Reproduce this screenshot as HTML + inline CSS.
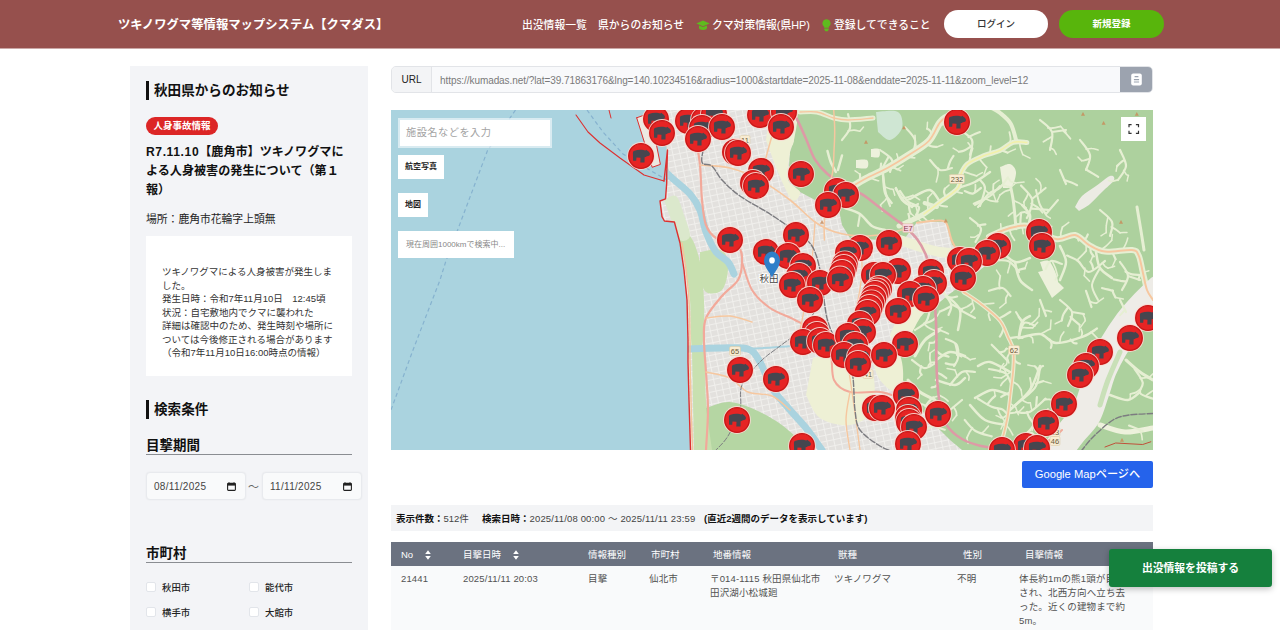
<!DOCTYPE html>
<html lang="ja">
<head>
<meta charset="utf-8">
<title>ツキノワグマ等情報マップシステム【クマダス】</title>
<style>
*{box-sizing:border-box;margin:0;padding:0}
html,body{width:1280px;height:630px;overflow:hidden;background:#fff}
body{font-family:"Liberation Sans","Noto Sans CJK JP",sans-serif;color:#222;position:relative;font-size:12px}
.abs{position:absolute}
/* header */
#hdr{position:absolute;left:0;top:0;width:1280px;height:48px;background:#96504d;box-shadow:0 1px 0 rgba(150,80,77,.5)}
#hdr .title{position:absolute;left:118px;top:1px;line-height:48px;color:#fff;font-weight:700;font-size:12.35px;white-space:nowrap}
#hdr .nav{position:absolute;top:1px;line-height:48px;color:#fff;font-weight:500;font-size:10.8px;white-space:nowrap}
.btn-login{position:absolute;left:944px;top:10px;width:104px;height:28px;border-radius:14px;background:#fff;color:#333;font-size:9.5px;text-align:center;line-height:28px;font-weight:500}
.btn-reg{position:absolute;left:1059px;top:10px;width:105px;height:28px;border-radius:14px;background:#58b50c;color:#fff;font-size:9.5px;text-align:center;line-height:28px;font-weight:700}
/* sidebar */
#side{position:absolute;left:130px;top:66px;width:238px;height:564px;background:#f3f4f7}
.h2{position:absolute;left:16px;border-left:3px solid #111;padding-left:5px;font-weight:700;font-size:13.6px;line-height:19px;margin-top:-1px;color:#111;white-space:nowrap}
.badge{position:absolute;left:16px;top:51px;width:72px;height:18px;border-radius:10px;background:#dc2626;color:#fff;font-weight:700;font-size:9.5px;line-height:18px;text-align:center}
.newsT{position:absolute;left:16px;top:77px;width:216px;white-space:nowrap;font-weight:700;font-size:12.1px;line-height:19.2px;color:#111}
.place{position:absolute;left:16px;top:144px;font-size:10.8px;line-height:18px;color:#222;white-space:nowrap}
.card{position:absolute;left:16px;top:170px;width:206px;height:140px;background:#fff}
.card p{position:absolute;left:16px;top:29px;width:176px;font-size:9.5px;line-height:13.5px;color:#333}
.h3{position:absolute;left:16px;width:206px;border-bottom:1px solid #8a8d92;font-weight:700;font-size:13.5px;line-height:20px;color:#111}
.date{position:absolute;top:406px;height:28px;width:100px;background:#f9fafb;border:1px solid #e8eaee;border-radius:4px;font-size:10px;line-height:28px;padding-left:7px;color:#444;letter-spacing:.3px;box-shadow:0 0 2px rgba(0,0,0,.06)}
.date svg{position:absolute;right:9px;top:9px}
.cb{position:absolute;width:10px;height:10px;border:1px solid #e2e5ea;background:#fff;border-radius:2px}
.cbl{position:absolute;font-size:9.4px;line-height:14px;font-weight:500;color:#222;white-space:nowrap}
/* main */
#url{position:absolute;left:391px;top:66px;width:762px;height:27px;border:1px solid #e2e4e8;border-radius:5px;background:#f8f9fb;overflow:hidden}
#url .lab{position:absolute;left:0;top:0;width:40px;height:25px;background:#f3f4f6;border-right:1px solid #e2e4e8;font-size:10px;font-weight:500;text-align:center;line-height:26px;color:#222}
#url .val{position:absolute;left:48px;top:1px;line-height:26px;font-size:10px;color:#7a7a7a;white-space:nowrap;letter-spacing:-.07px}
#url .cp{position:absolute;right:-1px;top:-1px;width:33px;height:27px;background:#9ca3af}
#url .cp svg{position:absolute;left:11px;top:7px}
#map{position:absolute;left:391px;top:110px;width:762px;height:340px;overflow:hidden;background:#aad3df}
.gm{position:absolute;left:1022px;top:461px;width:131px;height:27px;background:#2563eb;color:#fff;font-size:11.2px;line-height:27px;text-align:center;border-radius:2px;font-weight:500}
.info{position:absolute;left:391px;top:505px;width:762px;height:26px;background:#f3f4f6;font-size:9.5px;line-height:27px;color:#444;white-space:nowrap}
.info b{font-weight:700;color:#111}
.thead{position:absolute;left:391px;top:542px;width:762px;height:24px;background:#6b7280;color:#fff;font-size:9.5px;line-height:25px}
.thead span{position:absolute;top:0;white-space:nowrap}
.trow{position:absolute;left:391px;top:566px;width:762px;height:64px;background:#f9fafb;font-size:9.5px;line-height:14px;color:#525252;letter-spacing:.15px}
.trow span{position:absolute;top:6px}
.post{position:absolute;left:1109px;top:549px;width:163px;height:38px;background:#15803d;border-radius:3px;color:#fff;font-weight:700;font-size:10.8px;line-height:38px;text-align:center;box-shadow:0 2px 6px rgba(0,0,0,.25)}

.msearch{position:absolute;left:7px;top:8px;width:154px;height:30px;background:#fff;border:2px solid rgba(255,255,255,.55);background-clip:padding-box;font-size:10.2px;line-height:26px;color:#a3a3a3;padding-left:6px;letter-spacing:.5px}
.mbtn{position:absolute;height:24px;background:#fff;font-size:8px;font-weight:700;color:#222;text-align:center;line-height:24px;white-space:nowrap}
.mstat{position:absolute;left:7px;top:121px;width:116px;height:27px;background:#fff;font-size:8px;color:#888;line-height:27px;padding-left:8px;white-space:nowrap}
.mfull{position:absolute;left:730px;top:7px;width:25px;height:24px;background:#fff}
</style>
</head>
<body>
<div id="hdr">
  <div class="title">ツキノワグマ等情報マップシステム【クマダス】</div>
  <div class="nav" style="left:522px">出没情報一覧</div>
  <div class="nav" style="left:598px">県からのお知らせ</div>
  <svg class="abs" style="left:696px;top:20px" width="14" height="11" viewBox="0 0 14 11"><path d="M0.3 3.4 L7 0.6 L13.7 3.4 L7 6.2 Z M3 5.4 V8 C3 9.2 4.8 10 7 10 S11 9.2 11 8 V5.4 L7 7.1 Z" fill="#5fba1e"/></svg>
  <div class="nav" style="left:712px">クマ対策情報(県HP)</div>
  <svg class="abs" style="left:822px;top:19px" width="9" height="13" viewBox="0 0 9 13"><path d="M4.5 0.3 A4.1 4.1 0 0 1 6.9 7.7 V8.8 H2.100 V7.7 A4.1 4.1 0 0 1 4.5 0.300 Z M2.300 9.600 H6.700 V10.8 L5.700 12.3 H3.300 L2.300 10.8 Z" fill="#5fba1e"/></svg>
  <div class="nav" style="left:834px">登録してできること</div>
  <div class="btn-login">ログイン</div>
  <div class="btn-reg">新規登録</div>
</div>

<div id="side">
  <div class="h2" style="top:16px">秋田県からのお知らせ</div>
  <div class="badge">人身事故情報</div>
  <div class="newsT"><span style="letter-spacing:.6px">R7.11.10</span>【鹿角市】ツキノワグマに<br>よる人身被害の発生について（第１<br>報）</div>
  <div class="place">場所：鹿角市花輪字上頭無</div>
  <div class="card"><p>ツキノワグマによる人身被害が発生しました。<br>発生日時：令和7年11月10日　12:45頃<br>状況：自宅敷地内でクマに襲われた<br>詳細は確認中のため、発生時刻や場所については今後修正される場合があります<br>（令和7年11月10日16:00時点の情報）</p></div>
  <div class="h2" style="top:335px">検索条件</div>
  <div class="h3" style="top:371px;line-height:17px">目撃期間</div>
  <div class="date" style="left:16px">08/11/2025<svg width="9" height="9" viewBox="0 0 9 9"><path d="M2 0.300 V1.400 M7 0.300 V1.400" stroke="#222" stroke-width="1"/><rect x="0.6" y="1.4" width="7.8" height="7" rx="0.8" fill="none" stroke="#222" stroke-width="1.1"/><rect x="0.6" y="1.4" width="7.8" height="2.200" fill="#222"/></svg></div>
  <div class="abs" style="left:118px;top:412px;font-size:11px;color:#666">～</div>
  <div class="date" style="left:132px">11/11/2025<svg width="9" height="9" viewBox="0 0 9 9"><path d="M2 0.300 V1.400 M7 0.300 V1.400" stroke="#222" stroke-width="1"/><rect x="0.6" y="1.4" width="7.8" height="7" rx="0.8" fill="none" stroke="#222" stroke-width="1.1"/><rect x="0.6" y="1.4" width="7.8" height="2.200" fill="#222"/></svg></div>
  <div class="h3" style="top:479px;line-height:17px">市町村</div>
  <div class="cb" style="left:16px;top:516px"></div><div class="cbl" style="left:32px;top:515px">秋田市</div>
  <div class="cb" style="left:119px;top:516px"></div><div class="cbl" style="left:135px;top:515px">能代市</div>
  <div class="cb" style="left:16px;top:541px"></div><div class="cbl" style="left:32px;top:539.5px">横手市</div>
  <div class="cb" style="left:119px;top:541px"></div><div class="cbl" style="left:135px;top:539.5px">大館市</div>
</div>

<div id="url">
  <div class="lab">URL</div>
  <div class="val">https://kumadas.net/?lat=39.71863176&amp;lng=140.10234516&amp;radius=1000&amp;startdate=2025-11-08&amp;enddate=2025-11-11&amp;zoom_level=12</div>
  <div class="cp"><svg width="11" height="13" viewBox="0 0 11 13"><rect x="0.200" y="0.600" width="10.600" height="12" rx="2" fill="#fff"/><path d="M3.600 3.600H7.400M2.900 6.600H8.100M2.900 9H8.100" stroke="#9ca3af" stroke-width="1.200"/></svg></div>
</div>

<div id="map">
<svg width="762" height="340" viewBox="0 0 762 340" style="position:absolute;left:0;top:0">
<defs>
<clipPath id="landclip"><path d="M272.0 0.0 L275.7 40.0 L277.9 64.4 L275.7 73.3 L274.5 88.9 L269.0 91.0 L271.0 106.7 L273.4 111.0 L283.4 112.0 L289.0 133.0 L293.0 160.0 L296.0 190.0 L297.0 230.0 L297.0 252.0 L298.0 290.0 L299.5 340.0 L762.0 340.0 L762.0 0.0Z"/></clipPath>
<g id="mk"><circle r="13.9" fill="#fbd9d1" opacity=".92"/><circle r="12.3" fill="#e62424" stroke="#c81616" stroke-width="1.3"/><path d="M-7.9 4.700 L-8.100 -2.600 C-8.100 -4.200 -7.600 -4.900 -6.400 -5.200 C-4.400 -5.800 -2.200 -6.300 -0.300 -6.200 C1.600 -6.200 3 -5.900 4.300 -5.600 L5.400 -6.200 L6.400 -5.300 C7.600 -4.800 8.600 -3.600 8.900 -2.400 L8.700 -0.700 C7.800 -0.100 6.800 0.200 5.800 0.300 L4.800 1.100 L3.600 1.300 L3.500 6.600 L-0.700 6.600 L-0.500 1.700 L-4.500 1.500 L-4.800 4.700 Z" fill="#46464f"/></g>
<pattern id="st" width="7" height="6" patternUnits="userSpaceOnUse" patternTransform="rotate(-12)"><rect width="7" height="6" fill="#e3e1de"/><path d="M0 0.5H7M0.5 0V6" stroke="#f2f1ed" stroke-width=".9"/></pattern>
</defs>
<rect width="762" height="340" fill="#aad3df"/>
<path d="M124.5 0 L96.5 40.6 L67 119 L54.6 152 L49 170 L22 240 L0 300" fill="none" stroke="#86b2cf" stroke-width="1.2" stroke-dasharray="4 3"/>
<path d="M196 0 L212 22 L232 44 L262 62 L276 70" fill="none" stroke="#86b2cf" stroke-width="1.2" stroke-dasharray="4 3"/>
<path d="M-5 340 L24 262 L50 196 L62 150" fill="none" stroke="#8bb9cf" stroke-width="1" stroke-dasharray="4 3" opacity="0"/>
<path d="M272.0 0.0 L275.7 40.0 L277.9 64.4 L275.7 73.3 L274.5 88.9 L269.0 91.0 L271.0 106.7 L273.4 111.0 L283.4 112.0 L289.0 133.0 L293.0 160.0 L296.0 190.0 L297.0 230.0 L297.0 252.0 L298.0 290.0 L299.5 340.0 L762.0 340.0 L762.0 0.0Z" fill="#add19e"/>
<path d="M245.7 7.8 L259.0 3.0 L269.4 54.4 L261.2 57.3Z" fill="#ece9e2"/>
<g clip-path="url(#landclip)">
<path d="M209.0 0.0 L405.0 0.0 L403.0 30.0 L399.0 42.0 L397.0 70.0 L409.0 82.0 L424.0 90.0 L447.0 95.0 L451.0 115.0 L459.0 128.0 L489.0 130.0 L514.0 128.0 L526.0 112.0 L555.0 112.0 L561.0 135.0 L584.0 142.0 L605.0 130.0 L621.0 136.0 L594.0 156.0 L573.0 173.0 L556.0 186.0 L543.0 197.0 L529.0 205.0 L514.0 215.0 L508.0 243.0 L512.0 270.0 L522.0 290.0 L539.0 310.0 L559.0 330.0 L571.0 340.0 L209.0 340.0Z" fill="url(#st)"/>
<path d="M287.0 126.0 C289.0 126.0 295.3 121.7 299.0 126.0 C302.7 130.3 306.7 141.3 309.0 152.0 C311.3 162.7 312.5 177.0 313.0 190.0 C313.5 203.0 312.7 222.0 312.0 230.0 C311.3 238.0 310.8 236.7 309.0 238.0 C307.2 239.3 302.7 246.0 301.0 238.0 C299.3 230.0 300.2 204.3 299.0 190.0 C297.8 175.7 294.8 158.3 294.0 152.0Z" fill="#c8e0b0" />
<path d="M301.0 242.0 C303.0 242.0 310.7 234.0 313.0 242.0 C315.3 250.0 313.7 273.7 315.0 290.0 C316.3 306.3 323.0 331.7 321.0 340.0 C319.0 348.3 306.0 340.0 303.0 340.0Z" fill="#c8e0b0" />
<path d="M309.0 142.0 C312.7 141.7 326.3 137.3 331.0 140.0 C335.7 142.7 337.0 151.3 337.0 158.0 C337.0 164.7 334.7 176.0 331.0 180.0 C327.3 184.0 318.7 184.5 315.0 182.0 C311.3 179.5 310.0 167.8 309.0 165.0Z" fill="#c8e0b0" />
<path d="M315.0 298.0 C319.0 297.0 330.0 291.3 339.0 292.0 C348.0 292.7 359.3 297.3 369.0 302.0 C378.7 306.7 390.3 313.7 397.0 320.0 C403.7 326.3 421.7 336.7 409.0 340.0 C396.3 343.3 335.7 340.0 321.0 340.0Z" fill="#b5d6a3" />
<path d="M273.0 90.0 C275.0 89.3 281.7 83.5 285.0 86.0 C288.3 88.5 290.7 98.3 293.0 105.0 C295.3 111.7 299.7 121.8 299.0 126.0 C298.3 130.2 292.0 132.3 289.0 130.0 C286.0 127.7 282.3 115.0 281.0 112.0Z" fill="#dbe8cc" />
<path d="M489.0 230.0 C492.2 232.2 504.2 236.3 508.0 243.0 C511.8 249.7 512.7 263.5 512.0 270.0 C511.3 276.5 507.8 282.0 504.0 282.0 C500.2 282.0 492.8 275.3 489.0 270.0 C485.2 264.7 482.3 253.3 481.0 250.0Z" fill="#eef0d5" />
<path d="M379.0 2.0 C383.3 1.7 401.0 -4.7 405.0 0.0 C409.0 4.7 404.0 23.0 403.0 30.0 C402.0 37.0 400.0 35.3 399.0 42.0 C398.0 48.7 395.3 63.3 397.0 70.0 C398.7 76.7 408.3 78.7 409.0 82.0 C409.7 85.3 404.7 93.3 401.0 90.0 C397.3 86.7 391.3 72.0 387.0 62.0 C382.7 52.0 377.0 35.3 375.0 30.0Z" fill="#eef0d5" />
<path d="M422.0 248.0 C428.2 247.0 449.2 240.0 459.0 242.0 C468.8 244.0 477.3 250.3 481.0 260.0 C484.7 269.7 484.7 290.8 481.0 300.0 C477.3 309.2 467.7 313.7 459.0 315.0 C450.3 316.3 436.3 313.0 429.0 308.0 C421.7 303.0 417.3 288.8 415.0 285.0Z" fill="#eef0d5" />
<path d="M514.0 190.0 C518.8 190.0 540.5 187.0 543.0 190.0 C545.5 193.0 533.0 202.0 529.0 208.0 C525.0 214.0 522.5 220.7 519.0 226.0 C515.5 231.3 511.3 240.2 508.0 240.0 C504.7 239.8 500.5 227.5 499.0 225.0Z" fill="#eef0d5" />
<path d="M271.0 58.0 C272.7 59.7 276.3 63.7 281.0 68.0 C285.7 72.3 294.3 78.7 299.0 84.0 C303.7 89.3 306.3 93.7 309.0 100.0 C311.7 106.3 312.3 115.0 315.0 122.0 C317.7 129.0 321.3 137.0 325.0 142.0 C328.7 147.0 334.0 148.3 337.0 152.0 C340.0 155.7 342.0 162.0 343.0 164.0" fill="none" stroke="#aad3df" stroke-width="7" stroke-linecap="round" stroke-linejoin="round" />
<path d="M298.0 239.0 C303.2 238.8 319.2 238.0 329.0 238.0 C338.8 238.0 350.3 236.7 357.0 239.0 C363.7 241.3 365.0 245.5 369.0 252.0 C373.0 258.5 376.0 270.0 381.0 278.0 C386.0 286.0 393.3 293.3 399.0 300.0 C404.7 306.7 409.7 311.3 415.0 318.0 C420.3 324.7 428.3 336.3 431.0 340.0" fill="none" stroke="#aad3df" stroke-width="7" stroke-linecap="round" stroke-linejoin="round" />
<path d="M357.0 239.0 C365.7 238.3 396.7 236.8 409.0 235.0 C421.3 233.2 427.3 229.2 431.0 228.0" fill="none" stroke="#aad3df" stroke-width="2" stroke-linecap="round" stroke-linejoin="round" />
<path d="M459.0 78.0 C461.8 76.3 469.6 71.3 475.8 68.0 C482.0 64.7 489.5 61.8 496.4 58.0 C503.3 54.2 510.1 50.0 517.0 45.5 C523.9 41.0 532.5 36.5 537.8 31.0 C543.1 25.5 545.5 16.6 549.0 12.4 C552.5 8.2 556.2 6.2 559.0 6.0 C561.8 5.8 564.8 10.2 566.0 11.0" fill="none" stroke="#e6efd3" stroke-width="7" stroke-linecap="round" stroke-linejoin="round" />
<path d="M508.0 116.0 C512.2 114.0 526.2 108.0 533.0 104.0 C539.8 100.0 543.3 96.3 549.0 92.0 C554.7 87.7 563.5 82.5 567.0 78.0 C570.5 73.5 568.1 68.7 569.7 64.7 C571.3 60.7 572.6 57.1 576.4 54.0 C580.2 50.9 587.2 48.1 592.6 45.8 C598.0 43.6 603.9 42.7 608.8 40.5 C613.7 38.3 617.5 33.8 622.0 32.4 C626.5 31.1 633.5 32.4 635.8 32.4" fill="none" stroke="#e6efd3" stroke-width="5" stroke-linecap="round" stroke-linejoin="round" />
<path d="M625.0 29.7 C624.1 27.0 622.3 18.0 619.6 13.5 C616.9 9.0 611.9 5.3 608.8 2.7 C605.6 0.1 602.1 -1.2 600.7 -2.0" fill="none" stroke="#e6efd3" stroke-width="4" stroke-linecap="round" stroke-linejoin="round" />
<path d="M615.5 58.0 C616.6 63.2 620.4 78.9 622.0 89.0 C623.6 99.1 624.5 113.7 625.0 118.7" fill="none" stroke="#e6efd3" stroke-width="3" stroke-linecap="round" stroke-linejoin="round" />
<path d="M609.0 57.0 C610.7 56.5 616.3 53.2 619.0 54.0 C621.7 54.8 624.7 58.3 625.0 62.0 C625.3 65.7 623.2 73.3 621.0 76.0 C618.8 78.7 613.5 77.7 612.0 78.0Z" fill="#edf1dc" />
<path d="M684.0 97.0 C685.2 95.2 687.5 89.5 691.0 86.0 C694.5 82.5 700.3 79.3 705.0 76.0 C709.7 72.7 716.0 67.0 719.0 66.0 C722.0 65.0 724.3 67.3 723.0 70.0 C721.7 72.7 715.0 78.0 711.0 82.0 C707.0 86.0 702.8 90.8 699.0 94.0 C695.2 97.2 689.8 99.8 688.0 101.0Z" fill="#ecebe4" />
<path d="M598.0 126.7 C601.1 125.4 610.2 120.5 616.9 118.7 C623.6 116.9 630.0 114.3 638.0 116.0 C646.0 117.7 657.3 127.5 665.0 129.0 C672.7 130.5 678.5 124.0 684.0 125.0 C689.5 126.0 692.8 132.0 697.8 134.8 C702.8 137.6 706.8 140.7 714.0 141.6 C721.2 142.5 735.4 139.3 741.0 140.0 C746.6 140.7 745.9 142.0 747.7 145.6 C749.5 149.2 750.3 156.1 751.7 161.8 C753.1 167.5 755.3 177.0 756.0 180.0" fill="none" stroke="#e6efd3" stroke-width="6" stroke-linecap="round" stroke-linejoin="round" />
<path d="M746.0 97.0 C746.7 101.0 748.8 113.8 750.0 121.0 C751.2 128.2 752.5 136.8 753.0 140.0" fill="none" stroke="#e6efd3" stroke-width="3" stroke-linecap="round" stroke-linejoin="round" />
<path d="M631.0 95.0 C632.3 96.7 638.0 101.5 639.0 105.0 C640.0 108.5 637.3 114.2 637.0 116.0" fill="none" stroke="#e6efd3" stroke-width="2.5" stroke-linecap="round" stroke-linejoin="round" />
<path d="M645.0 80.0 C645.7 82.5 647.3 91.0 649.0 95.0 C650.7 99.0 654.0 102.5 655.0 104.0" fill="none" stroke="#e6efd3" stroke-width="2" stroke-linecap="round" stroke-linejoin="round" />
<path d="M655.0 104.0 C657.0 101.7 665.0 92.3 667.0 90.0" fill="none" stroke="#e6efd3" stroke-width="2" stroke-linecap="round" stroke-linejoin="round" />
<path d="M549.0 92.0 C547.3 90.0 543.2 81.0 539.0 80.0 C534.8 79.0 526.5 85.0 524.0 86.0" fill="none" stroke="#e6efd3" stroke-width="2.5" stroke-linecap="round" stroke-linejoin="round" />
<path d="M567.0 78.0 C569.8 77.0 578.7 74.7 584.0 72.0 C589.3 69.3 596.5 63.7 599.0 62.0" fill="none" stroke="#e6efd3" stroke-width="2.5" stroke-linecap="round" stroke-linejoin="round" />
<path d="M584.0 95.0 C586.5 93.5 594.8 89.2 599.0 86.0 C603.2 82.8 607.3 77.7 609.0 76.0" fill="none" stroke="#e6efd3" stroke-width="2" stroke-linecap="round" stroke-linejoin="round" />
<path d="M609.0 140.0 C611.5 142.0 619.0 150.7 624.0 152.0 C629.0 153.3 636.5 148.7 639.0 148.0" fill="none" stroke="#e6efd3" stroke-width="2.5" stroke-linecap="round" stroke-linejoin="round" />
<path d="M624.0 152.0 C624.8 155.0 626.2 165.3 629.0 170.0 C631.8 174.7 639.0 178.3 641.0 180.0" fill="none" stroke="#e6efd3" stroke-width="2.5" stroke-linecap="round" stroke-linejoin="round" />
<path d="M669.0 136.0 C670.0 138.7 675.0 146.3 675.0 152.0 C675.0 157.7 670.0 167.0 669.0 170.0" fill="none" stroke="#e6efd3" stroke-width="2.5" stroke-linecap="round" stroke-linejoin="round" />
<path d="M705.0 142.0 C705.7 144.7 706.3 153.7 709.0 158.0 C711.7 162.3 719.0 166.3 721.0 168.0" fill="none" stroke="#e6efd3" stroke-width="2.5" stroke-linecap="round" stroke-linejoin="round" />
<path d="M709.0 158.0 C707.7 160.8 701.3 169.7 701.0 175.0 C700.7 180.3 706.0 187.5 707.0 190.0" fill="none" stroke="#e6efd3" stroke-width="2" stroke-linecap="round" stroke-linejoin="round" />
<path d="M649.0 152.0 C650.7 152.0 656.0 148.7 659.0 152.0 C662.0 155.3 667.3 168.0 667.0 172.0 C666.7 176.0 658.7 175.3 657.0 176.0Z" fill="#edf1dc" />
<path d="M572.4 182.0 C575.3 184.0 583.9 189.2 590.0 194.0 C596.1 198.8 604.3 205.1 608.8 210.5 C613.3 215.9 614.6 221.7 616.9 226.6 C619.1 231.5 621.4 234.6 622.3 240.0 C623.2 245.4 622.8 251.8 622.3 259.0 C621.8 266.2 620.5 275.3 619.6 283.0 C618.7 290.7 618.0 298.2 616.9 305.0 C615.8 311.8 614.1 318.4 612.8 323.7 C611.4 329.0 609.5 334.8 608.8 337.0" fill="none" stroke="#e6efd3" stroke-width="4" stroke-linecap="round" stroke-linejoin="round" />
<path d="M627.7 228.0 C631.2 227.3 642.8 223.2 649.0 224.0 C655.2 224.8 657.8 232.6 665.0 233.0 C672.2 233.4 685.2 229.0 692.0 226.6 C698.8 224.2 703.6 219.8 705.9 218.5" fill="none" stroke="#e6efd3" stroke-width="2.5" stroke-linecap="round" stroke-linejoin="round" />
<path d="M627.7 228.0 C628.2 225.3 629.1 215.7 631.0 212.0 C632.9 208.3 637.7 207.0 639.0 206.0" fill="none" stroke="#e6efd3" stroke-width="2.5" stroke-linecap="round" stroke-linejoin="round" />
<path d="M631.0 212.0 C630.0 210.3 626.0 203.7 625.0 202.0" fill="none" stroke="#e6efd3" stroke-width="2" stroke-linecap="round" stroke-linejoin="round" />
<path d="M619.0 262.0 C615.7 260.3 604.3 253.0 599.0 252.0 C593.7 251.0 589.0 255.3 587.0 256.0" fill="none" stroke="#e6efd3" stroke-width="2.5" stroke-linecap="round" stroke-linejoin="round" />
<path d="M619.0 285.0 C616.0 284.2 606.8 279.5 601.0 280.0 C595.2 280.5 586.8 286.7 584.0 288.0" fill="none" stroke="#e6efd3" stroke-width="2.5" stroke-linecap="round" stroke-linejoin="round" />
<path d="M619.0 300.0 C622.3 296.7 634.0 287.3 639.0 280.0 C644.0 272.7 647.3 260.0 649.0 256.0" fill="none" stroke="#e6efd3" stroke-width="2.5" stroke-linecap="round" stroke-linejoin="round" />
<path d="M615.0 315.0 C611.5 314.2 600.0 313.3 594.0 310.0 C588.0 306.7 581.5 297.5 579.0 295.0" fill="none" stroke="#e6efd3" stroke-width="2.5" stroke-linecap="round" stroke-linejoin="round" />
<path d="M556.0 186.0 C558.2 188.3 567.2 194.3 569.0 200.0 C570.8 205.7 567.3 216.7 567.0 220.0" fill="none" stroke="#e6efd3" stroke-width="2.5" stroke-linecap="round" stroke-linejoin="round" />
<path d="M569.0 200.0 C571.5 201.3 581.5 206.7 584.0 208.0" fill="none" stroke="#e6efd3" stroke-width="2" stroke-linecap="round" stroke-linejoin="round" />
<path d="M545.0 250.0 C547.3 248.7 554.2 242.7 559.0 242.0 C563.8 241.3 571.5 245.3 574.0 246.0" fill="none" stroke="#e6efd3" stroke-width="2.5" stroke-linecap="round" stroke-linejoin="round" />
<path d="M545.0 270.0 C548.2 270.8 559.2 275.3 564.0 275.0 C568.8 274.7 572.3 269.2 574.0 268.0" fill="none" stroke="#e6efd3" stroke-width="2.5" stroke-linecap="round" stroke-linejoin="round" />
<path d="M549.0 220.0 C546.5 221.7 538.2 225.7 534.0 230.0 C529.8 234.3 525.7 243.3 524.0 246.0" fill="none" stroke="#e6efd3" stroke-width="3" stroke-linecap="round" stroke-linejoin="round" />
<path d="M544.0 290.0 C541.5 288.7 533.5 285.3 529.0 282.0 C524.5 278.7 519.0 272.0 517.0 270.0" fill="none" stroke="#e6efd3" stroke-width="3" stroke-linecap="round" stroke-linejoin="round" />
<path d="M509.0 130.0 C515.7 132.0 536.5 140.0 549.0 142.0 C561.5 144.0 574.0 143.0 584.0 142.0 C594.0 141.0 604.8 137.0 609.0 136.0" fill="none" stroke="#eef0d5" stroke-width="10" stroke-linecap="round" stroke-linejoin="round" />
<path d="M769.0 180.0 C766.1 182.8 756.9 191.5 751.7 197.0 C746.5 202.5 743.0 206.3 738.0 213.0 C733.0 219.7 726.5 229.7 722.0 237.4 C717.5 245.1 714.2 251.4 711.0 259.0 C707.8 266.6 705.7 275.4 703.0 283.0 C700.3 290.6 698.6 298.5 695.0 304.8 C691.4 311.1 686.3 315.1 681.6 321.0 C676.9 326.9 669.4 336.8 667.0 340.0" fill="none" stroke="#eeece7" stroke-width="30" stroke-linecap="round" stroke-linejoin="round" />
<path d="M729.0 242.0 C727.0 246.7 720.3 261.2 717.0 270.0 C713.7 278.8 710.3 290.8 709.0 295.0" fill="none" stroke="#c9e0b8" stroke-width="5" stroke-linecap="round" stroke-linejoin="round" />
<path d="M735.0 250.0 C737.3 252.0 744.5 258.7 749.0 262.0 C753.5 265.3 759.8 268.7 762.0 270.0" fill="none" stroke="#e6efd3" stroke-width="3" stroke-linecap="round" stroke-linejoin="round" />
<path d="M719.0 285.0 C722.0 285.8 732.0 290.5 737.0 290.0 C742.0 289.5 747.0 283.3 749.0 282.0" fill="none" stroke="#e6efd3" stroke-width="2.5" stroke-linecap="round" stroke-linejoin="round" />
<path d="M709.0 315.0 C713.2 316.2 725.2 321.5 734.0 322.0 C742.8 322.5 757.3 318.7 762.0 318.0" fill="none" stroke="#edf1dc" stroke-width="5" stroke-linecap="round" stroke-linejoin="round" />
<path d="M436.5 41.0 C437.0 42.8 438.2 48.2 439.6 51.7 C441.0 55.2 443.9 60.3 444.8 62.0" fill="none" stroke="#e6efd3" stroke-width="2.5" stroke-linecap="round" stroke-linejoin="round" />
<path d="M451.0 45.5 C450.3 47.9 447.6 57.6 446.9 60.0" fill="none" stroke="#e6efd3" stroke-width="2.5" stroke-linecap="round" stroke-linejoin="round" />
<path d="M480.0 39.0 C481.3 39.0 486.7 37.7 488.0 39.0 C489.3 40.3 489.3 45.7 488.0 47.0 C486.7 48.3 481.3 47.0 480.0 47.0Z" fill="#edf1dc" />
<path d="M465.0 50.0 C466.8 50.0 474.2 48.7 476.0 50.0 C477.8 51.3 477.8 56.7 476.0 58.0 C474.2 59.3 466.8 58.0 465.0 58.0Z" fill="#edf1dc" />
<path d="M409.0 2.0 C411.8 2.0 420.4 1.0 426.0 2.0 C431.6 3.0 437.5 6.7 442.7 8.0 C447.9 9.3 450.4 10.0 457.0 10.0 C463.6 10.0 477.8 8.3 482.0 8.0" fill="none" stroke="#e6efd3" stroke-width="5" stroke-linecap="round" stroke-linejoin="round" />
<path d="M492.0 64.0 C492.3 67.1 492.6 77.8 494.0 82.6 C495.4 87.4 499.5 91.3 500.6 93.0" fill="none" stroke="#e6efd3" stroke-width="2.5" stroke-linecap="round" stroke-linejoin="round" />
<path d="M504.7 78.5 C506.1 80.6 510.3 87.9 513.0 91.0 C515.7 94.1 519.7 96.0 521.0 97.0" fill="none" stroke="#e6efd3" stroke-width="2.5" stroke-linecap="round" stroke-linejoin="round" />
<path d="M533.6 93.0 C535.7 93.7 543.9 96.3 546.0 97.0" fill="none" stroke="#e6efd3" stroke-width="4" stroke-linecap="round" stroke-linejoin="round" />
<path d="M454.0 98.0 C456.5 99.0 464.5 101.0 469.0 104.0 C473.5 107.0 476.8 113.3 481.0 116.0 C485.2 118.7 491.8 119.3 494.0 120.0" fill="none" stroke="#e6efd3" stroke-width="2.5" stroke-linecap="round" stroke-linejoin="round" />
<path d="M469.0 104.0 C468.7 106.0 467.3 114.0 467.0 116.0" fill="none" stroke="#e6efd3" stroke-width="2" stroke-linecap="round" stroke-linejoin="round" />
<path d="M514.0 17.0 C515.7 19.2 522.8 25.2 524.0 30.0 C525.2 34.8 521.5 43.3 521.0 46.0" fill="none" stroke="#e6efd3" stroke-width="2" stroke-linecap="round" stroke-linejoin="round" />
<path d="M485.0 2.0 C488.7 2.0 502.7 -0.7 507.0 2.0 C511.3 4.7 512.3 13.3 511.0 18.0 C509.7 22.7 503.0 29.3 499.0 30.0 C495.0 30.7 489.0 23.3 487.0 22.0Z" fill="#cfe6d3" />
<path d="M549.0 178.0 C550.8 180.7 558.6 189.5 560.0 194.0 C561.4 198.5 557.9 203.2 557.5 205.0" fill="none" stroke="#e6efd3" stroke-width="2.2" stroke-linecap="round" stroke-linejoin="round" />
<path d="M560.0 194.0 C561.8 194.9 569.2 198.8 571.0 199.7" fill="none" stroke="#e6efd3" stroke-width="2.2" stroke-linecap="round" stroke-linejoin="round" />
<path d="M554.8 229.0 C556.6 229.9 563.6 231.5 565.6 234.7 C567.6 237.9 567.4 244.4 567.0 248.0 C566.6 251.6 563.7 254.7 563.0 256.0" fill="none" stroke="#e6efd3" stroke-width="2.2" stroke-linecap="round" stroke-linejoin="round" />
<path d="M598.0 180.8 C600.2 180.3 607.9 177.1 611.5 178.0 C615.1 178.9 618.2 184.7 619.6 186.0" fill="none" stroke="#e6efd3" stroke-width="2.2" stroke-linecap="round" stroke-linejoin="round" />
<path d="M600.7 234.7 C602.5 236.5 608.8 242.8 611.5 245.5 C614.2 248.2 616.0 250.1 616.9 251.0" fill="none" stroke="#e6efd3" stroke-width="2.2" stroke-linecap="round" stroke-linejoin="round" />
<path d="M598.0 259.0 C600.7 259.7 610.4 260.8 614.0 263.0 C617.6 265.2 618.7 270.9 619.6 272.5" fill="none" stroke="#e6efd3" stroke-width="2.2" stroke-linecap="round" stroke-linejoin="round" />
<path d="M587.0 288.7 C589.3 290.1 596.6 295.0 600.7 296.8 C604.8 298.6 608.8 298.1 611.5 299.5 C614.2 300.9 616.0 304.1 616.9 305.0" fill="none" stroke="#e6efd3" stroke-width="2.2" stroke-linecap="round" stroke-linejoin="round" />
<path d="M573.7 310.0 C575.5 311.8 580.0 318.3 584.5 321.0 C589.0 323.7 598.0 325.5 600.7 326.4" fill="none" stroke="#e6efd3" stroke-width="2.2" stroke-linecap="round" stroke-linejoin="round" />
<path d="M627.7 228.0 C628.6 225.5 630.3 215.0 633.0 213.0 C635.7 211.0 642.0 215.3 643.8 215.8" fill="none" stroke="#e6efd3" stroke-width="2.2" stroke-linecap="round" stroke-linejoin="round" />
<path d="M633.0 213.0 C632.1 212.0 628.6 208.0 627.7 207.0" fill="none" stroke="#e6efd3" stroke-width="2.2" stroke-linecap="round" stroke-linejoin="round" />
<path d="M622.0 296.8 C625.6 293.6 639.3 284.2 643.8 277.9 C648.3 271.6 647.6 262.6 649.0 259.0 C650.4 255.3 651.5 256.5 652.0 256.0" fill="none" stroke="#e6efd3" stroke-width="2.2" stroke-linecap="round" stroke-linejoin="round" />
<path d="M625.0 302.0 C627.2 302.0 633.6 304.2 638.5 302.0 C643.4 299.8 651.9 290.9 654.6 288.7" fill="none" stroke="#e6efd3" stroke-width="2.2" stroke-linecap="round" stroke-linejoin="round" />
<path d="M695.0 180.8 C695.5 182.2 696.9 186.2 697.8 188.9 C698.7 191.6 700.0 195.7 700.5 197.0" fill="none" stroke="#e6efd3" stroke-width="2.2" stroke-linecap="round" stroke-linejoin="round" />
<path d="M711.0 178.0 C712.8 178.5 720.2 180.3 722.0 180.8" fill="none" stroke="#e6efd3" stroke-width="2.2" stroke-linecap="round" stroke-linejoin="round" />
<path d="M743.6 259.0 C744.9 261.2 750.8 268.5 751.7 272.5 C752.6 276.5 747.3 280.3 749.0 283.0 C750.7 285.7 759.8 287.8 762.0 288.7" fill="none" stroke="#e6efd3" stroke-width="2.2" stroke-linecap="round" stroke-linejoin="round" />
<path d="M738.0 315.6 C740.3 316.5 749.4 320.1 751.7 321.0" fill="none" stroke="#e6efd3" stroke-width="2.2" stroke-linecap="round" stroke-linejoin="round" />
<path d="M509.0 81.0 C510.3 82.8 513.9 89.0 517.0 91.7 C520.1 94.4 526.6 94.8 527.9 97.0 C529.2 99.2 525.5 103.7 525.0 105.0" fill="none" stroke="#e6efd3" stroke-width="2.2" stroke-linecap="round" stroke-linejoin="round" />
<path d="M587.0 97.0 C588.8 94.8 594.4 86.8 598.0 83.6 C601.6 80.4 605.6 80.7 608.8 78.0 C611.9 75.3 615.5 69.2 616.9 67.4" fill="none" stroke="#e6efd3" stroke-width="2.2" stroke-linecap="round" stroke-linejoin="round" />
<path d="M573.7 81.0 C575.1 81.4 579.1 84.1 581.8 83.6 C584.5 83.1 588.6 78.9 590.0 78.0" fill="none" stroke="#e6efd3" stroke-width="2.2" stroke-linecap="round" stroke-linejoin="round" />
<path d="M630.0 75.5 C631.8 77.8 639.6 84.5 641.0 89.0 C642.4 93.5 639.4 99.3 638.5 102.5 C637.6 105.7 636.2 107.1 635.8 108.0" fill="none" stroke="#e6efd3" stroke-width="2.2" stroke-linecap="round" stroke-linejoin="round" />
<path d="M641.0 89.0 C643.3 87.2 652.3 79.8 654.6 78.0" fill="none" stroke="#e6efd3" stroke-width="2.2" stroke-linecap="round" stroke-linejoin="round" />
<path d="M641.0 98.7 C643.7 98.9 654.3 99.6 657.0 99.8" fill="none" stroke="#e6efd3" stroke-width="2.2" stroke-linecap="round" stroke-linejoin="round" />
<path d="M579.0 108.0 C580.8 109.8 589.1 114.7 590.0 118.7 C590.9 122.7 585.4 129.8 584.5 132.0" fill="none" stroke="#e6efd3" stroke-width="2.2" stroke-linecap="round" stroke-linejoin="round" />
<path d="M505.0 78.0 C506.0 80.0 508.3 87.0 511.0 90.0 C513.7 93.0 518.3 95.3 521.0 96.0 C523.7 96.7 526.0 94.3 527.0 94.0" fill="none" stroke="#e6efd3" stroke-width="2.2" stroke-linecap="round" stroke-linejoin="round" />
<path d="M492.0 66.0 C492.5 69.0 493.8 79.0 495.0 84.0 C496.2 89.0 498.3 94.0 499.0 96.0" fill="none" stroke="#e6efd3" stroke-width="2.2" stroke-linecap="round" stroke-linejoin="round" />
<path d="M589.0 70.0 C589.8 71.3 594.0 73.7 594.0 78.0 C594.0 82.3 589.8 93.0 589.0 96.0" fill="none" stroke="#e6efd3" stroke-width="2.2" stroke-linecap="round" stroke-linejoin="round" />
<path d="M598.0 151.0 C601.2 151.0 612.0 149.2 617.0 151.0 C622.0 152.8 626.2 160.2 628.0 162.0" fill="none" stroke="#e6efd3" stroke-width="2.2" stroke-linecap="round" stroke-linejoin="round" />
<path d="M654.6 159.0 C655.5 157.7 657.3 151.8 660.0 151.0 C662.7 150.2 669.2 153.5 671.0 154.0" fill="none" stroke="#e6efd3" stroke-width="2.2" stroke-linecap="round" stroke-linejoin="round" />
<path d="M676.0 145.6 C677.8 146.5 683.4 148.3 687.0 151.0 C690.6 153.7 693.3 162.0 697.8 162.0 C702.3 162.0 711.3 152.8 714.0 151.0" fill="none" stroke="#e6efd3" stroke-width="2.2" stroke-linecap="round" stroke-linejoin="round" />
<path d="M729.0 152.0 C730.3 154.3 736.7 161.3 737.0 166.0 C737.3 170.7 732.0 177.7 731.0 180.0" fill="none" stroke="#e6efd3" stroke-width="2.2" stroke-linecap="round" stroke-linejoin="round" />
<path d="M737.0 166.0 C739.0 166.7 747.0 169.3 749.0 170.0" fill="none" stroke="#e6efd3" stroke-width="2.2" stroke-linecap="round" stroke-linejoin="round" />
<path d="M669.0 190.0 C671.0 192.0 679.7 197.7 681.0 202.0 C682.3 206.3 677.7 213.7 677.0 216.0" fill="none" stroke="#e6efd3" stroke-width="2.2" stroke-linecap="round" stroke-linejoin="round" />
<path d="M681.0 202.0 C683.0 202.3 691.0 203.7 693.0 204.0" fill="none" stroke="#e6efd3" stroke-width="2.2" stroke-linecap="round" stroke-linejoin="round" />
<path d="M649.0 190.0 C650.0 192.7 654.0 203.3 655.0 206.0" fill="none" stroke="#e6efd3" stroke-width="2.2" stroke-linecap="round" stroke-linejoin="round" />
<path d="M729.0 190.0 C730.0 192.0 734.0 200.0 735.0 202.0" fill="none" stroke="#e6efd3" stroke-width="2.2" stroke-linecap="round" stroke-linejoin="round" />
<path d="M559.0 275.0 C561.0 272.8 566.8 264.2 571.0 262.0 C575.2 259.8 581.8 262.0 584.0 262.0" fill="none" stroke="#e6efd3" stroke-width="2.2" stroke-linecap="round" stroke-linejoin="round" />
<path d="M571.0 290.0 C569.0 291.7 561.0 298.3 559.0 300.0" fill="none" stroke="#e6efd3" stroke-width="2.2" stroke-linecap="round" stroke-linejoin="round" />
<path d="M639.0 320.0 C640.7 318.0 645.3 310.7 649.0 308.0 C652.7 305.3 659.0 304.7 661.0 304.0" fill="none" stroke="#e6efd3" stroke-width="2.2" stroke-linecap="round" stroke-linejoin="round" />
<path d="M629.0 330.0 C630.7 328.3 637.3 321.7 639.0 320.0" fill="none" stroke="#e6efd3" stroke-width="2.2" stroke-linecap="round" stroke-linejoin="round" />
<path d="M569.0 20.0 C571.0 21.7 579.3 25.8 581.0 30.0 C582.7 34.2 579.3 42.5 579.0 45.0" fill="none" stroke="#e6efd3" stroke-width="2.2" stroke-linecap="round" stroke-linejoin="round" />
<path d="M649.0 10.0 C651.0 12.0 659.3 17.0 661.0 22.0 C662.7 27.0 659.3 37.0 659.0 40.0" fill="none" stroke="#e6efd3" stroke-width="2.2" stroke-linecap="round" stroke-linejoin="round" />
<path d="M661.0 22.0 C663.3 21.7 672.7 20.3 675.0 20.0" fill="none" stroke="#e6efd3" stroke-width="2.2" stroke-linecap="round" stroke-linejoin="round" />
<path d="M689.0 30.0 C690.7 32.5 698.0 40.0 699.0 45.0 C700.0 50.0 695.7 57.5 695.0 60.0" fill="none" stroke="#e6efd3" stroke-width="2.2" stroke-linecap="round" stroke-linejoin="round" />
<path d="M729.0 40.0 C730.0 42.7 735.3 51.0 735.0 56.0 C734.7 61.0 728.3 67.7 727.0 70.0" fill="none" stroke="#e6efd3" stroke-width="2.2" stroke-linecap="round" stroke-linejoin="round" />
<path d="M669.0 60.0 C670.0 62.3 674.0 71.7 675.0 74.0" fill="none" stroke="#e6efd3" stroke-width="2.2" stroke-linecap="round" stroke-linejoin="round" />
<path d="M709.0 100.0 C711.0 102.0 719.3 107.7 721.0 112.0 C722.7 116.3 719.3 123.7 719.0 126.0" fill="none" stroke="#e6efd3" stroke-width="2.2" stroke-linecap="round" stroke-linejoin="round" />
<path d="M539.0 50.0 C540.7 51.7 545.3 58.7 549.0 60.0 C552.7 61.3 559.0 58.3 561.0 58.0" fill="none" stroke="#e6efd3" stroke-width="2.2" stroke-linecap="round" stroke-linejoin="round" />
<path d="M489.0 40.0 C491.0 41.7 499.3 46.3 501.0 50.0 C502.7 53.7 499.3 60.0 499.0 62.0" fill="none" stroke="#e6efd3" stroke-width="2.2" stroke-linecap="round" stroke-linejoin="round" />
<path d="M451.0 30.0 C452.3 28.0 458.0 22.3 459.0 18.0 C460.0 13.7 457.3 6.3 457.0 4.0" fill="none" stroke="#e6efd3" stroke-width="2.2" stroke-linecap="round" stroke-linejoin="round" />
<path d="M524.0 220.0 C525.8 218.7 532.5 215.3 535.0 212.0 C537.5 208.7 538.3 202.0 539.0 200.0" fill="none" stroke="#e6efd3" stroke-width="2.2" stroke-linecap="round" stroke-linejoin="round" />
<path d="M521.0 250.0 C523.0 251.3 529.3 257.3 533.0 258.0 C536.7 258.7 541.3 254.7 543.0 254.0" fill="none" stroke="#e6efd3" stroke-width="2.2" stroke-linecap="round" stroke-linejoin="round" />
<path d="M514.0 300.0 C516.5 299.0 524.2 294.0 529.0 294.0 C533.8 294.0 540.7 299.0 543.0 300.0" fill="none" stroke="#e6efd3" stroke-width="2.2" stroke-linecap="round" stroke-linejoin="round" />
<path d="M534.0 320.0 C536.2 319.0 544.8 315.0 547.0 314.0" fill="none" stroke="#e6efd3" stroke-width="2.2" stroke-linecap="round" stroke-linejoin="round" />
<path d="M647.0 162.0 L655.0 160.0 L673.0 178.0 L661.0 188.0Z" fill="#edf1dc" />
<path d="M468.5 72.4 C468.6 71.5 469.0 68.4 469.1 67.0 C469.2 65.6 468.9 64.6 468.9 64.2" fill="none" stroke="#e6efd3" stroke-width="2.2" stroke-linecap="round" stroke-linejoin="round" />
<path d="M468.9 64.2 C468.1 63.6 464.9 61.4 464.1 60.8" fill="none" stroke="#e6efd3" stroke-width="1.5" stroke-linecap="round" stroke-linejoin="round" />
<path d="M478.0 66.9 C478.7 67.3 480.4 68.4 482.0 69.0 C483.6 69.7 486.7 70.5 487.6 70.8" fill="none" stroke="#e6efd3" stroke-width="1.6" stroke-linecap="round" stroke-linejoin="round" />
<path d="M487.9 62.1 C488.1 61.6 489.0 60.6 489.4 59.2 C489.8 57.8 490.0 54.6 490.1 53.6" fill="none" stroke="#e6efd3" stroke-width="2.2" stroke-linecap="round" stroke-linejoin="round" />
<path d="M497.7 57.2 C498.5 57.2 500.7 56.9 502.1 57.3 C503.5 57.7 505.5 59.2 506.2 59.5" fill="none" stroke="#e6efd3" stroke-width="1.8" stroke-linecap="round" stroke-linejoin="round" />
<path d="M506.2 59.5 C507.2 58.9 511.2 56.2 512.2 55.5" fill="none" stroke="#e6efd3" stroke-width="1.5" stroke-linecap="round" stroke-linejoin="round" />
<path d="M507.1 51.5 C507.1 50.7 506.9 48.0 506.7 46.7 C506.4 45.4 505.9 44.3 505.8 43.8" fill="none" stroke="#e6efd3" stroke-width="1.6" stroke-linecap="round" stroke-linejoin="round" />
<path d="M516.5 45.8 C517.0 46.0 518.0 47.0 519.2 47.4 C520.4 47.7 523.0 47.8 523.7 47.8" fill="none" stroke="#e6efd3" stroke-width="1.8" stroke-linecap="round" stroke-linejoin="round" />
<path d="M525.6 39.5 C525.4 38.2 524.6 34.0 524.4 31.6 C524.1 29.2 524.1 26.3 524.0 25.2" fill="none" stroke="#e6efd3" stroke-width="1.6" stroke-linecap="round" stroke-linejoin="round" />
<path d="M534.6 33.2 C535.5 33.7 538.3 35.6 540.2 36.2 C542.0 36.8 544.7 36.8 545.6 36.9" fill="none" stroke="#e6efd3" stroke-width="2.2" stroke-linecap="round" stroke-linejoin="round" />
<path d="M545.6 36.9 C546.6 36.6 550.8 35.1 551.9 34.7" fill="none" stroke="#e6efd3" stroke-width="1.5" stroke-linecap="round" stroke-linejoin="round" />
<path d="M541.5 24.9 C541.0 24.2 539.7 21.5 538.8 20.4 C537.9 19.4 536.6 19.0 536.1 18.7" fill="none" stroke="#e6efd3" stroke-width="2.2" stroke-linecap="round" stroke-linejoin="round" />
<path d="M536.1 18.7 C536.2 17.6 536.4 13.3 536.5 12.3" fill="none" stroke="#e6efd3" stroke-width="1.5" stroke-linecap="round" stroke-linejoin="round" />
<path d="M547.1 15.5 C548.0 15.4 550.3 14.5 552.5 14.7 C554.7 14.8 559.2 16.0 560.5 16.3" fill="none" stroke="#e6efd3" stroke-width="1.8" stroke-linecap="round" stroke-linejoin="round" />
<path d="M517.9 111.2 C518.0 110.7 518.4 109.2 518.3 107.9 C518.2 106.7 517.6 104.5 517.4 103.8" fill="none" stroke="#e6efd3" stroke-width="2.2" stroke-linecap="round" stroke-linejoin="round" />
<path d="M527.8 106.5 C528.7 106.7 531.3 106.7 532.7 107.5 C534.2 108.3 536.0 110.8 536.6 111.4" fill="none" stroke="#e6efd3" stroke-width="1.8" stroke-linecap="round" stroke-linejoin="round" />
<path d="M536.6 111.4 C537.6 111.1 541.3 109.9 542.2 109.6" fill="none" stroke="#e6efd3" stroke-width="1.5" stroke-linecap="round" stroke-linejoin="round" />
<path d="M537.2 100.8 C537.1 100.0 536.8 97.8 536.7 95.6 C536.6 93.5 536.8 89.2 536.8 87.9" fill="none" stroke="#e6efd3" stroke-width="1.8" stroke-linecap="round" stroke-linejoin="round" />
<path d="M536.8 87.9 C537.5 87.2 540.3 84.2 541.0 83.5" fill="none" stroke="#e6efd3" stroke-width="1.5" stroke-linecap="round" stroke-linejoin="round" />
<path d="M546.0 94.2 C546.9 94.5 549.6 95.6 551.3 96.0 C553.0 96.4 555.4 96.5 556.2 96.6" fill="none" stroke="#e6efd3" stroke-width="1.8" stroke-linecap="round" stroke-linejoin="round" />
<path d="M554.7 87.5 C554.4 86.6 553.2 83.6 553.0 82.1 C552.9 80.6 553.7 79.3 553.8 78.7" fill="none" stroke="#e6efd3" stroke-width="2.2" stroke-linecap="round" stroke-linejoin="round" />
<path d="M553.8 78.7 C554.5 78.1 557.4 75.6 558.1 75.0" fill="none" stroke="#e6efd3" stroke-width="1.5" stroke-linecap="round" stroke-linejoin="round" />
<path d="M563.4 80.8 C564.1 81.0 566.1 81.9 567.4 82.3 C568.7 82.7 570.6 83.0 571.2 83.2" fill="none" stroke="#e6efd3" stroke-width="1.8" stroke-linecap="round" stroke-linejoin="round" />
<path d="M568.3 71.7 C567.6 71.3 565.5 70.2 563.9 69.2 C562.4 68.2 559.7 66.3 558.9 65.7" fill="none" stroke="#e6efd3" stroke-width="1.6" stroke-linecap="round" stroke-linejoin="round" />
<path d="M571.8 61.4 C573.0 61.8 577.0 63.0 579.3 63.8 C581.6 64.5 584.6 65.5 585.7 65.8" fill="none" stroke="#e6efd3" stroke-width="1.8" stroke-linecap="round" stroke-linejoin="round" />
<path d="M585.7 65.8 C586.7 65.3 590.5 63.1 591.4 62.6" fill="none" stroke="#e6efd3" stroke-width="1.5" stroke-linecap="round" stroke-linejoin="round" />
<path d="M578.4 53.0 C578.6 51.6 579.2 46.9 579.7 44.5 C580.2 42.1 581.1 39.4 581.4 38.4" fill="none" stroke="#e6efd3" stroke-width="2.2" stroke-linecap="round" stroke-linejoin="round" />
<path d="M581.4 38.4 C580.7 37.5 577.7 33.7 577.0 32.7" fill="none" stroke="#e6efd3" stroke-width="1.5" stroke-linecap="round" stroke-linejoin="round" />
<path d="M588.2 48.0 C588.6 48.6 589.4 50.2 590.7 51.8 C591.9 53.3 594.8 56.4 595.7 57.3" fill="none" stroke="#e6efd3" stroke-width="1.8" stroke-linecap="round" stroke-linejoin="round" />
<path d="M595.7 57.3 C595.2 58.5 593.5 63.1 593.1 64.3" fill="none" stroke="#e6efd3" stroke-width="1.5" stroke-linecap="round" stroke-linejoin="round" />
<path d="M598.4 43.9 C598.5 43.5 598.8 42.7 599.1 41.4 C599.3 40.1 599.7 37.0 599.8 36.1" fill="none" stroke="#e6efd3" stroke-width="1.8" stroke-linecap="round" stroke-linejoin="round" />
<path d="M608.9 40.5 C609.4 40.5 610.9 40.5 612.1 40.9 C613.4 41.2 615.7 42.4 616.4 42.7" fill="none" stroke="#e6efd3" stroke-width="2.2" stroke-linecap="round" stroke-linejoin="round" />
<path d="M616.4 42.7 C617.7 42.1 623.1 39.7 624.4 39.1" fill="none" stroke="#e6efd3" stroke-width="1.5" stroke-linecap="round" stroke-linejoin="round" />
<path d="M618.2 34.7 C618.5 33.8 619.5 31.3 619.6 29.2 C619.6 27.1 618.6 23.4 618.4 22.2" fill="none" stroke="#e6efd3" stroke-width="1.8" stroke-linecap="round" stroke-linejoin="round" />
<path d="M628.6 32.4 C628.7 33.3 628.9 36.1 629.5 38.1 C630.0 40.1 631.4 43.5 631.8 44.6" fill="none" stroke="#e6efd3" stroke-width="1.6" stroke-linecap="round" stroke-linejoin="round" />
<path d="M631.8 44.6 C633.0 45.2 637.8 47.6 639.0 48.2" fill="none" stroke="#e6efd3" stroke-width="1.5" stroke-linecap="round" stroke-linejoin="round" />
<path d="M608.1 122.4 C608.4 121.9 609.6 121.0 609.9 119.5 C610.1 118.1 609.8 114.7 609.7 113.8" fill="none" stroke="#e6efd3" stroke-width="1.6" stroke-linecap="round" stroke-linejoin="round" />
<path d="M618.4 118.5 C618.7 119.5 619.3 122.5 620.1 124.5 C621.0 126.5 623.0 129.4 623.5 130.3" fill="none" stroke="#e6efd3" stroke-width="1.8" stroke-linecap="round" stroke-linejoin="round" />
<path d="M629.3 117.1 C629.3 115.9 629.4 111.8 629.5 109.5 C629.7 107.3 629.9 104.8 630.0 103.8" fill="none" stroke="#e6efd3" stroke-width="2.2" stroke-linecap="round" stroke-linejoin="round" />
<path d="M640.0 117.0 C640.3 118.4 641.8 123.1 641.9 125.6 C642.1 128.0 641.1 130.4 640.9 131.4" fill="none" stroke="#e6efd3" stroke-width="1.8" stroke-linecap="round" stroke-linejoin="round" />
<path d="M640.9 131.4 C641.6 132.1 644.3 134.9 644.9 135.6" fill="none" stroke="#e6efd3" stroke-width="1.5" stroke-linecap="round" stroke-linejoin="round" />
<path d="M649.9 121.7 C651.0 121.5 654.7 121.0 656.5 120.1 C658.3 119.2 659.9 117.0 660.6 116.4" fill="none" stroke="#e6efd3" stroke-width="1.8" stroke-linecap="round" stroke-linejoin="round" />
<path d="M659.8 126.5 C660.1 127.3 661.3 129.4 661.6 131.4 C661.8 133.4 661.4 137.4 661.3 138.5" fill="none" stroke="#e6efd3" stroke-width="1.8" stroke-linecap="round" stroke-linejoin="round" />
<path d="M670.1 127.9 C670.1 127.2 669.6 125.2 669.8 123.4 C670.0 121.6 671.1 118.2 671.4 117.2" fill="none" stroke="#e6efd3" stroke-width="1.8" stroke-linecap="round" stroke-linejoin="round" />
<path d="M671.4 117.2 C672.5 116.4 676.8 113.2 677.8 112.4" fill="none" stroke="#e6efd3" stroke-width="1.5" stroke-linecap="round" stroke-linejoin="round" />
<path d="M680.9 125.7 C681.7 125.8 684.6 125.9 685.7 126.7 C686.8 127.5 687.3 129.9 687.6 130.5" fill="none" stroke="#e6efd3" stroke-width="2.2" stroke-linecap="round" stroke-linejoin="round" />
<path d="M690.4 129.5 C691.1 129.4 693.5 129.3 694.6 128.5 C695.7 127.6 696.5 125.2 696.8 124.5" fill="none" stroke="#e6efd3" stroke-width="2.2" stroke-linecap="round" stroke-linejoin="round" />
<path d="M699.5 135.5 C699.6 136.6 699.2 140.1 699.8 141.9 C700.3 143.7 702.3 145.7 702.8 146.4" fill="none" stroke="#e6efd3" stroke-width="2.2" stroke-linecap="round" stroke-linejoin="round" />
<path d="M709.7 139.8 C710.6 139.2 713.2 137.8 715.0 136.2 C716.8 134.6 719.7 131.3 720.7 130.4" fill="none" stroke="#e6efd3" stroke-width="1.6" stroke-linecap="round" stroke-linejoin="round" />
<path d="M720.7 130.4 C720.8 129.4 721.3 125.4 721.4 124.4" fill="none" stroke="#e6efd3" stroke-width="1.5" stroke-linecap="round" stroke-linejoin="round" />
<path d="M720.3 141.2 C720.6 141.7 721.5 142.8 722.2 144.1 C722.9 145.5 724.2 148.4 724.6 149.2" fill="none" stroke="#e6efd3" stroke-width="2.2" stroke-linecap="round" stroke-linejoin="round" />
<path d="M724.6 149.2 C724.0 150.5 721.8 155.6 721.2 156.8" fill="none" stroke="#e6efd3" stroke-width="1.5" stroke-linecap="round" stroke-linejoin="round" />
<path d="M731.3 140.6 C731.9 139.3 734.2 135.3 735.1 133.2 C736.1 131.1 736.5 128.9 736.7 128.1" fill="none" stroke="#e6efd3" stroke-width="1.6" stroke-linecap="round" stroke-linejoin="round" />
<path d="M581.5 188.2 C581.5 188.8 581.2 190.2 581.5 191.9 C581.8 193.6 583.0 197.4 583.3 198.6" fill="none" stroke="#e6efd3" stroke-width="1.6" stroke-linecap="round" stroke-linejoin="round" />
<path d="M583.3 198.6 C582.7 199.3 580.4 202.0 579.8 202.7" fill="none" stroke="#e6efd3" stroke-width="1.5" stroke-linecap="round" stroke-linejoin="round" />
<path d="M590.5 194.5 C591.6 194.3 594.7 194.0 596.8 193.8 C598.9 193.6 601.9 193.3 602.9 193.2" fill="none" stroke="#e6efd3" stroke-width="1.6" stroke-linecap="round" stroke-linejoin="round" />
<path d="M598.8 201.7 C598.6 202.2 597.5 203.4 597.5 204.8 C597.6 206.2 598.8 209.3 599.1 210.2" fill="none" stroke="#e6efd3" stroke-width="1.8" stroke-linecap="round" stroke-linejoin="round" />
<path d="M607.1 209.0 C608.1 208.4 611.0 206.9 613.1 205.7 C615.1 204.5 618.3 202.4 619.4 201.8" fill="none" stroke="#e6efd3" stroke-width="2.2" stroke-linecap="round" stroke-linejoin="round" />
<path d="M612.7 218.3 C612.4 219.1 611.4 222.0 610.8 223.3 C610.1 224.7 609.1 226.1 608.8 226.6" fill="none" stroke="#e6efd3" stroke-width="2.2" stroke-linecap="round" stroke-linejoin="round" />
<path d="M617.5 228.1 C618.9 228.0 623.5 227.3 625.9 227.2 C628.2 227.2 630.6 227.7 631.5 227.8" fill="none" stroke="#e6efd3" stroke-width="2.2" stroke-linecap="round" stroke-linejoin="round" />
<path d="M621.6 238.3 C621.1 239.1 619.6 241.1 618.7 242.6 C617.8 244.1 616.7 246.7 616.3 247.5" fill="none" stroke="#e6efd3" stroke-width="1.8" stroke-linecap="round" stroke-linejoin="round" />
<path d="M616.3 247.5 C616.6 248.4 617.6 252.2 617.9 253.1" fill="none" stroke="#e6efd3" stroke-width="1.5" stroke-linecap="round" stroke-linejoin="round" />
<path d="M622.3 249.2 C623.0 249.8 625.3 252.0 626.4 252.8 C627.5 253.5 628.5 253.6 628.9 253.7" fill="none" stroke="#e6efd3" stroke-width="2.2" stroke-linecap="round" stroke-linejoin="round" />
<path d="M622.2 260.2 C621.4 260.7 619.7 262.0 617.7 263.3 C615.8 264.6 611.7 267.2 610.4 268.0" fill="none" stroke="#e6efd3" stroke-width="1.6" stroke-linecap="round" stroke-linejoin="round" />
<path d="M610.4 268.0 C609.2 267.9 604.1 267.4 602.8 267.3" fill="none" stroke="#e6efd3" stroke-width="1.5" stroke-linecap="round" stroke-linejoin="round" />
<path d="M620.9 271.1 C621.9 271.8 625.5 273.8 627.0 275.2 C628.5 276.7 629.6 279.1 630.1 279.9" fill="none" stroke="#e6efd3" stroke-width="1.8" stroke-linecap="round" stroke-linejoin="round" />
<path d="M630.1 279.9 C630.3 280.9 630.9 285.2 631.1 286.2" fill="none" stroke="#e6efd3" stroke-width="1.5" stroke-linecap="round" stroke-linejoin="round" />
<path d="M619.7 282.1 C619.0 282.4 617.1 283.3 615.6 284.1 C614.0 284.9 611.1 286.4 610.2 286.9" fill="none" stroke="#e6efd3" stroke-width="2.2" stroke-linecap="round" stroke-linejoin="round" />
<path d="M618.4 293.0 C619.1 293.5 621.9 295.3 622.9 296.0 C624.0 296.7 624.3 297.0 624.6 297.2" fill="none" stroke="#e6efd3" stroke-width="1.6" stroke-linecap="round" stroke-linejoin="round" />
<path d="M624.6 297.2 C625.1 298.5 626.9 303.6 627.4 304.8" fill="none" stroke="#e6efd3" stroke-width="1.5" stroke-linecap="round" stroke-linejoin="round" />
<path d="M617.0 303.9 C616.4 304.4 614.4 306.4 613.3 307.1 C612.1 307.7 610.5 307.6 610.0 307.7" fill="none" stroke="#e6efd3" stroke-width="1.8" stroke-linecap="round" stroke-linejoin="round" />
<path d="M610.0 307.7 C609.2 307.4 605.9 305.9 605.1 305.6" fill="none" stroke="#e6efd3" stroke-width="1.5" stroke-linecap="round" stroke-linejoin="round" />
<path d="M614.8 314.7 C615.3 315.3 616.9 316.8 618.1 318.5 C619.3 320.2 621.3 323.9 621.9 325.0" fill="none" stroke="#e6efd3" stroke-width="1.6" stroke-linecap="round" stroke-linejoin="round" />
<path d="M638.5 226.0 C639.0 226.3 640.8 226.9 641.4 228.1 C641.9 229.2 641.9 232.0 642.1 232.8" fill="none" stroke="#e6efd3" stroke-width="1.6" stroke-linecap="round" stroke-linejoin="round" />
<path d="M649.3 224.2 C650.3 223.6 653.9 221.7 655.6 220.8 C657.3 219.9 658.8 219.2 659.4 218.9" fill="none" stroke="#e6efd3" stroke-width="1.6" stroke-linecap="round" stroke-linejoin="round" />
<path d="M659.4 218.9 C659.5 217.4 659.9 211.5 660.0 210.0" fill="none" stroke="#e6efd3" stroke-width="1.5" stroke-linecap="round" stroke-linejoin="round" />
<path d="M658.9 229.6 C659.2 230.3 660.5 232.7 660.6 234.1 C660.8 235.5 660.0 237.3 659.8 237.9" fill="none" stroke="#e6efd3" stroke-width="2.2" stroke-linecap="round" stroke-linejoin="round" />
<path d="M668.9 232.1 C669.0 231.2 669.2 228.2 669.9 226.5 C670.6 224.8 672.4 222.6 672.9 221.9" fill="none" stroke="#e6efd3" stroke-width="1.6" stroke-linecap="round" stroke-linejoin="round" />
<path d="M679.6 229.5 C680.1 230.1 681.6 232.3 682.6 232.9 C683.6 233.6 685.1 233.4 685.6 233.4" fill="none" stroke="#e6efd3" stroke-width="2.2" stroke-linecap="round" stroke-linejoin="round" />
<path d="M690.3 227.0 C690.4 226.3 691.2 224.2 691.2 222.9 C691.1 221.6 690.3 219.8 690.1 219.2" fill="none" stroke="#e6efd3" stroke-width="1.8" stroke-linecap="round" stroke-linejoin="round" />
<path d="M700.0 222.0 C700.7 222.7 702.8 224.6 704.5 226.4 C706.2 228.2 709.3 231.5 710.2 232.6" fill="none" stroke="#e6efd3" stroke-width="1.6" stroke-linecap="round" stroke-linejoin="round" />
<path d="M710.2 232.6 C711.3 232.6 715.6 232.6 716.6 232.6" fill="none" stroke="#e6efd3" stroke-width="1.5" stroke-linecap="round" stroke-linejoin="round" />
<path d="M617.8 68.8 C618.1 69.2 618.8 70.9 619.9 71.6 C621.1 72.3 623.8 72.7 624.6 72.9" fill="none" stroke="#e6efd3" stroke-width="1.8" stroke-linecap="round" stroke-linejoin="round" />
<path d="M624.6 72.9 C626.0 72.8 631.6 72.2 633.0 72.1" fill="none" stroke="#e6efd3" stroke-width="1.5" stroke-linecap="round" stroke-linejoin="round" />
<path d="M620.0 79.5 C619.0 79.9 615.7 80.6 613.8 81.5 C612.0 82.4 609.8 84.4 608.9 85.0" fill="none" stroke="#e6efd3" stroke-width="1.8" stroke-linecap="round" stroke-linejoin="round" />
<path d="M608.9 85.0 C608.5 86.1 606.6 90.2 606.1 91.2" fill="none" stroke="#e6efd3" stroke-width="1.5" stroke-linecap="round" stroke-linejoin="round" />
<path d="M622.1 90.3 C623.4 91.0 627.8 92.9 629.9 94.1 C632.0 95.4 634.0 97.1 634.9 97.7" fill="none" stroke="#e6efd3" stroke-width="1.6" stroke-linecap="round" stroke-linejoin="round" />
<path d="M634.9 97.7 C635.2 98.6 636.5 102.2 636.8 103.1" fill="none" stroke="#e6efd3" stroke-width="1.5" stroke-linecap="round" stroke-linejoin="round" />
<path d="M623.2 101.3 C622.6 101.7 620.6 103.3 619.6 104.1 C618.6 105.0 617.7 105.8 617.3 106.1" fill="none" stroke="#e6efd3" stroke-width="1.6" stroke-linecap="round" stroke-linejoin="round" />
<path d="M624.3 112.2 C624.7 112.6 625.5 113.8 626.7 114.8 C627.8 115.7 630.6 117.4 631.4 118.0" fill="none" stroke="#e6efd3" stroke-width="1.6" stroke-linecap="round" stroke-linejoin="round" />
<path d="M631.4 118.0 C631.6 118.9 632.1 122.8 632.3 123.8" fill="none" stroke="#e6efd3" stroke-width="1.5" stroke-linecap="round" stroke-linejoin="round" />
<path d="M544.6 208.0 C543.9 208.5 542.0 210.2 540.3 211.0 C538.7 211.9 535.6 212.8 534.6 213.2" fill="none" stroke="#e6efd3" stroke-width="2.2" stroke-linecap="round" stroke-linejoin="round" />
<path d="M545.1 219.0 C546.3 219.4 549.9 220.5 551.9 221.3 C554.0 222.1 556.5 223.3 557.4 223.7" fill="none" stroke="#e6efd3" stroke-width="1.8" stroke-linecap="round" stroke-linejoin="round" />
<path d="M545.4 230.0 C545.0 230.4 544.1 232.1 543.0 232.5 C541.9 233.0 539.3 232.7 538.6 232.8" fill="none" stroke="#e6efd3" stroke-width="2.2" stroke-linecap="round" stroke-linejoin="round" />
<path d="M538.6 232.8 C538.4 234.1 537.5 239.4 537.2 240.7" fill="none" stroke="#e6efd3" stroke-width="1.5" stroke-linecap="round" stroke-linejoin="round" />
<path d="M545.4 241.0 C546.2 241.5 548.0 243.4 550.1 244.4 C552.1 245.3 556.4 246.3 557.6 246.7" fill="none" stroke="#e6efd3" stroke-width="2.2" stroke-linecap="round" stroke-linejoin="round" />
<path d="M545.4 252.0 C544.5 252.1 541.3 252.0 540.0 252.6 C538.6 253.2 537.8 255.0 537.4 255.5" fill="none" stroke="#e6efd3" stroke-width="1.8" stroke-linecap="round" stroke-linejoin="round" />
<path d="M546.0 262.9 C546.6 263.1 547.8 263.2 549.3 264.1 C550.9 264.9 554.3 267.4 555.3 268.1" fill="none" stroke="#e6efd3" stroke-width="2.2" stroke-linecap="round" stroke-linejoin="round" />
<path d="M546.6 273.9 C546.2 274.4 545.5 275.9 544.5 276.5 C543.5 277.1 541.2 277.4 540.6 277.5" fill="none" stroke="#e6efd3" stroke-width="2.2" stroke-linecap="round" stroke-linejoin="round" />
<path d="M547.8 284.9 C548.7 285.4 551.6 286.8 553.2 287.9 C554.7 288.9 556.5 290.5 557.1 291.1" fill="none" stroke="#e6efd3" stroke-width="1.6" stroke-linecap="round" stroke-linejoin="round" />
<path d="M549.3 295.7 C548.4 296.6 545.5 299.3 543.9 300.8 C542.4 302.3 540.7 304.3 540.1 305.0" fill="none" stroke="#e6efd3" stroke-width="1.8" stroke-linecap="round" stroke-linejoin="round" />
<path d="M555.2 187.1 C556.2 187.2 559.4 187.7 561.2 187.6 C563.0 187.5 565.2 186.7 566.1 186.5" fill="none" stroke="#e6efd3" stroke-width="2.2" stroke-linecap="round" stroke-linejoin="round" />
<path d="M559.4 196.5 C558.5 197.0 555.4 198.7 553.6 199.5 C551.8 200.3 549.6 201.2 548.8 201.6" fill="none" stroke="#e6efd3" stroke-width="2.2" stroke-linecap="round" stroke-linejoin="round" />
<path d="M548.8 201.6 C548.3 202.3 546.6 205.4 546.2 206.1" fill="none" stroke="#e6efd3" stroke-width="1.5" stroke-linecap="round" stroke-linejoin="round" />
<path d="M569.8 199.1 C570.8 198.7 574.0 197.7 575.9 196.8 C577.7 195.8 580.0 194.0 580.8 193.4" fill="none" stroke="#e6efd3" stroke-width="1.8" stroke-linecap="round" stroke-linejoin="round" />
<path d="M564.5 234.1 C564.8 235.3 565.8 239.2 566.0 240.9 C566.2 242.7 565.9 244.1 565.9 244.8" fill="none" stroke="#e6efd3" stroke-width="2.2" stroke-linecap="round" stroke-linejoin="round" />
<path d="M565.9 244.8 C566.6 245.1 569.7 246.5 570.5 246.9" fill="none" stroke="#e6efd3" stroke-width="1.5" stroke-linecap="round" stroke-linejoin="round" />
<path d="M566.6 244.4 C567.9 244.8 572.2 246.0 574.3 246.9 C576.4 247.8 578.3 249.3 579.1 249.7" fill="none" stroke="#e6efd3" stroke-width="1.8" stroke-linecap="round" stroke-linejoin="round" />
<path d="M579.1 249.7 C580.0 249.5 583.4 248.6 584.3 248.4" fill="none" stroke="#e6efd3" stroke-width="1.5" stroke-linecap="round" stroke-linejoin="round" />
<path d="M563.7 254.6 C562.9 254.6 560.3 254.5 558.8 254.3 C557.3 254.1 555.4 253.6 554.7 253.4" fill="none" stroke="#e6efd3" stroke-width="2.2" stroke-linecap="round" stroke-linejoin="round" />
<path d="M608.8 178.6 C608.7 177.7 608.1 175.6 608.2 173.5 C608.3 171.3 609.1 167.2 609.3 165.9" fill="none" stroke="#e6efd3" stroke-width="1.8" stroke-linecap="round" stroke-linejoin="round" />
<path d="M609.3 165.9 C608.6 165.0 606.1 161.1 605.5 160.1" fill="none" stroke="#e6efd3" stroke-width="1.5" stroke-linecap="round" stroke-linejoin="round" />
<path d="M617.3 183.8 C617.0 184.4 615.4 186.3 615.0 187.8 C614.6 189.4 614.9 192.0 614.8 192.8" fill="none" stroke="#e6efd3" stroke-width="1.8" stroke-linecap="round" stroke-linejoin="round" />
<path d="M614.8 192.8 C613.8 193.7 609.7 197.1 608.7 197.9" fill="none" stroke="#e6efd3" stroke-width="1.5" stroke-linecap="round" stroke-linejoin="round" />
<path d="M608.5 242.5 C609.3 242.3 612.1 241.8 613.2 241.2 C614.4 240.5 615.1 239.0 615.4 238.6" fill="none" stroke="#e6efd3" stroke-width="2.2" stroke-linecap="round" stroke-linejoin="round" />
<path d="M615.4 238.6 C616.5 238.7 620.8 239.3 621.9 239.4" fill="none" stroke="#e6efd3" stroke-width="1.5" stroke-linecap="round" stroke-linejoin="round" />
<path d="M616.2 250.3 C616.1 251.0 616.2 253.2 615.5 254.3 C614.9 255.4 612.8 256.4 612.3 256.8" fill="none" stroke="#e6efd3" stroke-width="1.6" stroke-linecap="round" stroke-linejoin="round" />
<path d="M612.3 256.8 C612.7 257.8 614.4 261.5 614.9 262.4" fill="none" stroke="#e6efd3" stroke-width="1.5" stroke-linecap="round" stroke-linejoin="round" />
<path d="M608.7 261.7 C608.9 261.0 609.3 259.0 610.0 257.7 C610.6 256.3 612.2 254.3 612.7 253.6" fill="none" stroke="#e6efd3" stroke-width="1.6" stroke-linecap="round" stroke-linejoin="round" />
<path d="M616.8 267.7 C616.0 268.5 613.1 271.1 611.9 272.4 C610.7 273.7 610.2 275.0 609.8 275.5" fill="none" stroke="#e6efd3" stroke-width="1.8" stroke-linecap="round" stroke-linejoin="round" />
<path d="M596.5 294.3 C597.2 293.4 599.7 290.2 601.0 288.8 C602.3 287.4 603.7 286.4 604.2 285.9" fill="none" stroke="#e6efd3" stroke-width="2.2" stroke-linecap="round" stroke-linejoin="round" />
<path d="M604.2 285.9 C604.0 284.9 603.4 280.9 603.3 279.8" fill="none" stroke="#e6efd3" stroke-width="1.5" stroke-linecap="round" stroke-linejoin="round" />
<path d="M606.6 298.3 C607.0 299.3 607.8 302.4 609.0 304.5 C610.2 306.6 612.9 309.8 613.6 310.9" fill="none" stroke="#e6efd3" stroke-width="1.8" stroke-linecap="round" stroke-linejoin="round" />
<path d="M613.6 310.9 C613.0 312.2 610.6 317.6 610.0 319.0" fill="none" stroke="#e6efd3" stroke-width="1.5" stroke-linecap="round" stroke-linejoin="round" />
<path d="M615.7 303.7 C616.6 303.6 619.1 303.3 621.1 303.0 C623.1 302.7 626.7 302.1 627.8 301.9" fill="none" stroke="#e6efd3" stroke-width="1.8" stroke-linecap="round" stroke-linejoin="round" />
<path d="M627.8 301.9 C628.6 301.1 631.9 297.8 632.7 296.9" fill="none" stroke="#e6efd3" stroke-width="1.5" stroke-linecap="round" stroke-linejoin="round" />
<path d="M581.4 317.8 C580.9 318.6 579.4 320.7 578.5 322.3 C577.6 324.0 576.3 326.9 575.9 327.8" fill="none" stroke="#e6efd3" stroke-width="1.8" stroke-linecap="round" stroke-linejoin="round" />
<path d="M575.9 327.8 C576.1 328.8 576.9 332.5 577.1 333.4" fill="none" stroke="#e6efd3" stroke-width="1.5" stroke-linecap="round" stroke-linejoin="round" />
<path d="M590.7 323.1 C591.2 322.7 592.6 321.7 593.7 320.6 C594.8 319.4 596.8 316.9 597.4 316.2" fill="none" stroke="#e6efd3" stroke-width="1.6" stroke-linecap="round" stroke-linejoin="round" />
<path d="M631.4 217.6 C632.2 217.7 634.5 217.7 636.3 217.8 C638.0 217.8 640.8 217.8 641.7 217.8" fill="none" stroke="#e6efd3" stroke-width="1.8" stroke-linecap="round" stroke-linejoin="round" />
<path d="M641.7 217.8 C642.5 216.9 645.8 213.3 646.7 212.4" fill="none" stroke="#e6efd3" stroke-width="1.5" stroke-linecap="round" stroke-linejoin="round" />
<path d="M638.9 214.5 C639.7 214.0 642.0 212.6 643.5 211.1 C645.1 209.7 647.3 206.9 648.0 206.0" fill="none" stroke="#e6efd3" stroke-width="1.6" stroke-linecap="round" stroke-linejoin="round" />
<path d="M648.0 206.0 C648.1 204.7 648.3 199.7 648.3 198.4" fill="none" stroke="#e6efd3" stroke-width="1.5" stroke-linecap="round" stroke-linejoin="round" />
<path d="M630.3 289.6 C631.2 290.1 634.2 292.0 635.7 292.6 C637.2 293.1 638.7 292.7 639.3 292.7" fill="none" stroke="#e6efd3" stroke-width="1.6" stroke-linecap="round" stroke-linejoin="round" />
<path d="M639.3 292.7 C639.5 293.9 640.4 298.4 640.7 299.5" fill="none" stroke="#e6efd3" stroke-width="1.5" stroke-linecap="round" stroke-linejoin="round" />
<path d="M638.6 282.4 C638.9 281.2 640.0 277.7 640.1 275.3 C640.2 272.8 639.2 269.2 639.0 268.0" fill="none" stroke="#e6efd3" stroke-width="1.8" stroke-linecap="round" stroke-linejoin="round" />
<path d="M644.9 273.9 C645.3 273.7 646.3 273.0 647.5 272.6 C648.8 272.1 651.5 271.3 652.3 271.1" fill="none" stroke="#e6efd3" stroke-width="2.2" stroke-linecap="round" stroke-linejoin="round" />
<path d="M652.3 271.1 C653.6 271.5 658.7 273.0 660.0 273.4" fill="none" stroke="#e6efd3" stroke-width="1.5" stroke-linecap="round" stroke-linejoin="round" />
<path d="M647.8 263.3 C647.5 262.5 646.7 259.6 646.0 258.4 C645.4 257.3 644.2 256.7 643.9 256.3" fill="none" stroke="#e6efd3" stroke-width="2.2" stroke-linecap="round" stroke-linejoin="round" />
<path d="M643.9 256.3 C642.7 256.1 638.0 255.3 636.8 255.1" fill="none" stroke="#e6efd3" stroke-width="1.5" stroke-linecap="round" stroke-linejoin="round" />
<path d="M636.0 302.0 C636.3 302.8 637.0 305.2 638.0 307.1 C639.1 309.0 641.8 312.3 642.5 313.4" fill="none" stroke="#e6efd3" stroke-width="2.2" stroke-linecap="round" stroke-linejoin="round" />
<path d="M642.5 313.4 C642.3 314.6 641.3 319.4 641.1 320.7" fill="none" stroke="#e6efd3" stroke-width="1.5" stroke-linecap="round" stroke-linejoin="round" />
<path d="M645.1 296.6 C645.1 296.0 645.2 294.8 645.4 293.3 C645.5 291.7 645.8 288.2 645.9 287.2" fill="none" stroke="#e6efd3" stroke-width="2.2" stroke-linecap="round" stroke-linejoin="round" />
<path d="M653.5 289.6 C654.5 289.6 657.3 289.1 659.1 289.5 C660.9 290.0 663.5 291.8 664.4 292.3" fill="none" stroke="#e6efd3" stroke-width="1.8" stroke-linecap="round" stroke-linejoin="round" />
<path d="M698.6 191.2 C699.1 191.5 700.9 192.4 702.0 192.7 C703.2 193.0 704.9 193.1 705.5 193.2" fill="none" stroke="#e6efd3" stroke-width="1.8" stroke-linecap="round" stroke-linejoin="round" />
<path d="M705.5 193.2 C706.6 192.3 711.3 188.9 712.5 188.1" fill="none" stroke="#e6efd3" stroke-width="1.5" stroke-linecap="round" stroke-linejoin="round" />
<path d="M721.7 180.7 C721.8 181.2 722.1 182.7 722.6 183.8 C723.1 184.9 724.2 186.8 724.5 187.4" fill="none" stroke="#e6efd3" stroke-width="2.2" stroke-linecap="round" stroke-linejoin="round" />
<path d="M724.5 187.4 C725.8 187.7 731.0 188.8 732.3 189.1" fill="none" stroke="#e6efd3" stroke-width="1.5" stroke-linecap="round" stroke-linejoin="round" />
<path d="M749.3 268.4 C750.2 268.3 753.5 267.7 755.0 267.6 C756.4 267.5 757.4 267.8 757.9 267.9" fill="none" stroke="#e6efd3" stroke-width="1.6" stroke-linecap="round" stroke-linejoin="round" />
<path d="M757.9 267.9 C758.9 266.9 762.9 262.8 763.9 261.8" fill="none" stroke="#e6efd3" stroke-width="1.5" stroke-linecap="round" stroke-linejoin="round" />
<path d="M750.1 278.6 C749.3 279.2 746.9 281.5 745.1 282.4 C743.3 283.3 740.4 283.7 739.4 284.0" fill="none" stroke="#e6efd3" stroke-width="1.8" stroke-linecap="round" stroke-linejoin="round" />
<path d="M739.4 284.0 C739.4 284.9 739.1 288.6 739.0 289.5" fill="none" stroke="#e6efd3" stroke-width="1.5" stroke-linecap="round" stroke-linejoin="round" />
<path d="M754.9 285.6 C755.7 285.0 758.7 282.8 759.9 282.0 C761.0 281.2 761.6 280.8 762.0 280.6" fill="none" stroke="#e6efd3" stroke-width="1.6" stroke-linecap="round" stroke-linejoin="round" />
<path d="M748.2 319.6 C748.6 320.4 749.9 322.5 750.4 324.1 C750.9 325.8 751.2 328.8 751.3 329.8" fill="none" stroke="#e6efd3" stroke-width="1.6" stroke-linecap="round" stroke-linejoin="round" />
<path d="M515.6 89.8 C516.2 89.7 517.6 89.8 519.0 89.1 C520.5 88.5 523.5 86.4 524.4 85.8" fill="none" stroke="#e6efd3" stroke-width="2.2" stroke-linecap="round" stroke-linejoin="round" />
<path d="M524.8 95.5 C525.1 96.8 526.4 101.2 526.7 103.3 C527.0 105.4 526.6 107.3 526.6 108.2" fill="none" stroke="#e6efd3" stroke-width="1.8" stroke-linecap="round" stroke-linejoin="round" />
<path d="M526.6 108.2 C527.2 108.8 529.7 111.3 530.4 111.9" fill="none" stroke="#e6efd3" stroke-width="1.5" stroke-linecap="round" stroke-linejoin="round" />
<path d="M594.0 88.5 C595.0 88.9 597.8 90.4 600.0 90.9 C602.1 91.4 605.5 91.5 606.7 91.7" fill="none" stroke="#e6efd3" stroke-width="1.8" stroke-linecap="round" stroke-linejoin="round" />
<path d="M602.1 81.5 C602.2 80.8 602.2 78.6 602.2 77.4 C602.3 76.1 602.4 74.6 602.5 74.1" fill="none" stroke="#e6efd3" stroke-width="1.8" stroke-linecap="round" stroke-linejoin="round" />
<path d="M602.5 74.1 C603.4 73.4 607.2 70.8 608.2 70.2" fill="none" stroke="#e6efd3" stroke-width="1.5" stroke-linecap="round" stroke-linejoin="round" />
<path d="M610.9 75.2 C611.7 75.4 614.2 75.7 615.6 76.1 C617.1 76.4 619.0 77.2 619.6 77.5" fill="none" stroke="#e6efd3" stroke-width="1.8" stroke-linecap="round" stroke-linejoin="round" />
<path d="M619.6 77.5 C620.3 76.9 622.9 74.6 623.6 74.1" fill="none" stroke="#e6efd3" stroke-width="1.5" stroke-linecap="round" stroke-linejoin="round" />
<path d="M583.9 82.2 C584.0 81.5 584.3 79.3 584.4 78.0 C584.5 76.8 584.4 75.3 584.4 74.7" fill="none" stroke="#e6efd3" stroke-width="1.8" stroke-linecap="round" stroke-linejoin="round" />
<path d="M636.9 84.0 C636.7 84.6 636.2 86.2 635.5 87.5 C634.8 88.9 633.2 91.3 632.8 92.1" fill="none" stroke="#e6efd3" stroke-width="1.8" stroke-linecap="round" stroke-linejoin="round" />
<path d="M632.8 92.1 C632.9 93.1 633.5 97.0 633.6 98.0" fill="none" stroke="#e6efd3" stroke-width="1.5" stroke-linecap="round" stroke-linejoin="round" />
<path d="M640.2 93.5 C641.3 94.2 645.3 96.2 647.2 97.8 C649.1 99.3 650.9 101.9 651.6 102.7" fill="none" stroke="#e6efd3" stroke-width="1.8" stroke-linecap="round" stroke-linejoin="round" />
<path d="M637.7 104.2 C637.0 103.8 635.0 102.2 633.7 102.0 C632.4 101.8 630.4 102.7 629.7 102.8" fill="none" stroke="#e6efd3" stroke-width="2.2" stroke-linecap="round" stroke-linejoin="round" />
<path d="M629.7 102.8 C628.9 103.5 625.7 106.2 624.9 106.9" fill="none" stroke="#e6efd3" stroke-width="1.5" stroke-linecap="round" stroke-linejoin="round" />
<path d="M649.6 82.1 C649.6 81.1 650.1 77.5 650.0 75.9 C649.8 74.2 648.9 72.8 648.7 72.2" fill="none" stroke="#e6efd3" stroke-width="1.6" stroke-linecap="round" stroke-linejoin="round" />
<path d="M648.7 72.2 C648.0 71.6 645.5 69.2 644.9 68.6" fill="none" stroke="#e6efd3" stroke-width="1.5" stroke-linecap="round" stroke-linejoin="round" />
<path d="M652.0 99.5 C652.5 100.4 653.9 103.8 655.1 105.3 C656.3 106.7 658.6 107.7 659.3 108.2" fill="none" stroke="#e6efd3" stroke-width="1.6" stroke-linecap="round" stroke-linejoin="round" />
<path d="M586.9 115.7 C587.3 115.6 588.2 115.2 589.5 115.0 C590.7 114.8 593.6 114.4 594.4 114.3" fill="none" stroke="#e6efd3" stroke-width="2.2" stroke-linecap="round" stroke-linejoin="round" />
<path d="M587.5 124.8 C586.8 125.2 584.8 126.8 583.5 127.2 C582.2 127.5 580.3 127.1 579.7 127.1" fill="none" stroke="#e6efd3" stroke-width="1.6" stroke-linecap="round" stroke-linejoin="round" />
<path d="M509.9 87.8 C510.7 87.8 512.8 88.1 514.8 87.7 C516.8 87.3 520.8 85.8 522.0 85.4" fill="none" stroke="#e6efd3" stroke-width="1.8" stroke-linecap="round" stroke-linejoin="round" />
<path d="M522.0 85.4 C523.1 86.2 527.6 89.1 528.7 89.8" fill="none" stroke="#e6efd3" stroke-width="1.5" stroke-linecap="round" stroke-linejoin="round" />
<path d="M518.4 94.4 C518.3 95.0 518.0 96.3 518.1 97.8 C518.3 99.3 519.2 102.4 519.5 103.3" fill="none" stroke="#e6efd3" stroke-width="2.2" stroke-linecap="round" stroke-linejoin="round" />
<path d="M519.5 103.3 C520.6 104.2 525.4 107.9 526.5 108.9" fill="none" stroke="#e6efd3" stroke-width="1.5" stroke-linecap="round" stroke-linejoin="round" />
<path d="M493.8 76.9 C494.7 77.2 497.5 78.2 498.9 78.7 C500.4 79.1 501.7 79.4 502.2 79.6" fill="none" stroke="#e6efd3" stroke-width="1.6" stroke-linecap="round" stroke-linejoin="round" />
<path d="M502.2 79.6 C502.5 80.5 503.5 84.3 503.8 85.3" fill="none" stroke="#e6efd3" stroke-width="1.5" stroke-linecap="round" stroke-linejoin="round" />
<path d="M496.2 87.6 C495.8 88.0 495.1 89.2 494.0 90.5 C492.8 91.7 490.2 94.2 489.5 95.0" fill="none" stroke="#e6efd3" stroke-width="1.6" stroke-linecap="round" stroke-linejoin="round" />
<path d="M489.5 95.0 C489.8 96.0 491.0 100.2 491.3 101.2" fill="none" stroke="#e6efd3" stroke-width="1.5" stroke-linecap="round" stroke-linejoin="round" />
<path d="M593.6 79.5 C594.2 80.1 595.9 82.1 597.4 83.0 C599.0 83.9 601.9 84.5 602.7 84.8" fill="none" stroke="#e6efd3" stroke-width="1.6" stroke-linecap="round" stroke-linejoin="round" />
<path d="M602.7 84.8 C603.1 85.9 604.5 89.9 604.9 90.9" fill="none" stroke="#e6efd3" stroke-width="1.5" stroke-linecap="round" stroke-linejoin="round" />
<path d="M590.6 90.1 C589.9 90.5 587.3 91.6 586.0 92.2 C584.7 92.8 583.3 93.4 582.8 93.7" fill="none" stroke="#e6efd3" stroke-width="2.2" stroke-linecap="round" stroke-linejoin="round" />
<path d="M619.1 153.1 C619.0 153.7 618.7 155.1 618.3 156.7 C617.8 158.3 616.9 161.8 616.7 162.8" fill="none" stroke="#e6efd3" stroke-width="1.6" stroke-linecap="round" stroke-linejoin="round" />
<path d="M626.9 160.9 C627.3 160.6 628.1 159.8 629.2 159.4 C630.4 158.9 633.2 158.6 634.0 158.4" fill="none" stroke="#e6efd3" stroke-width="2.2" stroke-linecap="round" stroke-linejoin="round" />
<path d="M634.0 158.4 C634.4 157.4 635.8 153.3 636.2 152.2" fill="none" stroke="#e6efd3" stroke-width="1.5" stroke-linecap="round" stroke-linejoin="round" />
<path d="M661.3 151.4 C661.8 152.5 663.5 155.8 664.4 158.1 C665.2 160.4 666.1 164.1 666.5 165.3" fill="none" stroke="#e6efd3" stroke-width="1.6" stroke-linecap="round" stroke-linejoin="round" />
<path d="M666.5 165.3 C666.1 166.1 664.7 169.2 664.3 169.9" fill="none" stroke="#e6efd3" stroke-width="1.5" stroke-linecap="round" stroke-linejoin="round" />
<path d="M685.9 150.4 C686.7 149.6 689.4 146.9 691.0 145.3 C692.6 143.7 694.5 141.6 695.2 140.8" fill="none" stroke="#e6efd3" stroke-width="1.8" stroke-linecap="round" stroke-linejoin="round" />
<path d="M695.2 140.8 C695.2 139.9 695.1 136.2 695.1 135.2" fill="none" stroke="#e6efd3" stroke-width="1.5" stroke-linecap="round" stroke-linejoin="round" />
<path d="M693.8 158.0 C693.8 158.5 693.9 160.1 693.8 161.4 C693.7 162.7 693.3 164.9 693.2 165.7" fill="none" stroke="#e6efd3" stroke-width="1.6" stroke-linecap="round" stroke-linejoin="round" />
<path d="M693.2 165.7 C694.1 166.6 697.6 170.2 698.5 171.1" fill="none" stroke="#e6efd3" stroke-width="1.5" stroke-linecap="round" stroke-linejoin="round" />
<path d="M702.2 159.0 C702.0 158.3 701.7 156.2 701.2 155.0 C700.7 153.8 699.7 152.3 699.4 151.8" fill="none" stroke="#e6efd3" stroke-width="2.2" stroke-linecap="round" stroke-linejoin="round" />
<path d="M699.4 151.8 C699.9 150.7 701.6 146.3 702.0 145.2" fill="none" stroke="#e6efd3" stroke-width="1.5" stroke-linecap="round" stroke-linejoin="round" />
<path d="M711.3 152.8 C711.8 153.4 713.2 155.5 714.1 156.4 C715.1 157.3 716.6 157.9 717.0 158.2" fill="none" stroke="#e6efd3" stroke-width="1.6" stroke-linecap="round" stroke-linejoin="round" />
<path d="M717.0 158.2 C718.2 157.9 722.6 156.6 723.7 156.3" fill="none" stroke="#e6efd3" stroke-width="1.5" stroke-linecap="round" stroke-linejoin="round" />
<path d="M734.5 161.6 C735.6 162.0 738.8 163.9 741.1 164.4 C743.5 165.0 747.3 164.8 748.5 164.9" fill="none" stroke="#e6efd3" stroke-width="2.2" stroke-linecap="round" stroke-linejoin="round" />
<path d="M734.7 171.4 C733.9 171.3 731.8 171.1 729.8 170.8 C727.8 170.4 723.9 169.6 722.7 169.4" fill="none" stroke="#e6efd3" stroke-width="2.2" stroke-linecap="round" stroke-linejoin="round" />
<path d="M747.4 169.5 C747.7 168.8 748.2 166.9 749.0 165.7 C749.8 164.5 751.7 163.0 752.2 162.5" fill="none" stroke="#e6efd3" stroke-width="2.2" stroke-linecap="round" stroke-linejoin="round" />
<path d="M752.2 162.5 C753.2 162.2 757.0 161.0 757.9 160.7" fill="none" stroke="#e6efd3" stroke-width="1.5" stroke-linecap="round" stroke-linejoin="round" />
<path d="M676.8 197.8 C676.0 198.9 673.4 202.2 672.4 204.4 C671.4 206.5 671.0 209.6 670.7 210.6" fill="none" stroke="#e6efd3" stroke-width="2.2" stroke-linecap="round" stroke-linejoin="round" />
<path d="M670.7 210.6 C669.6 211.1 665.2 213.4 664.1 213.9" fill="none" stroke="#e6efd3" stroke-width="1.5" stroke-linecap="round" stroke-linejoin="round" />
<path d="M679.6 206.8 C680.3 207.5 682.0 209.3 683.5 210.6 C685.0 211.9 687.7 214.1 688.6 214.8" fill="none" stroke="#e6efd3" stroke-width="2.2" stroke-linecap="round" stroke-linejoin="round" />
<path d="M688.6 214.8 C688.5 216.0 688.3 220.5 688.2 221.6" fill="none" stroke="#e6efd3" stroke-width="1.5" stroke-linecap="round" stroke-linejoin="round" />
<path d="M691.9 203.8 C692.1 204.4 693.0 206.0 693.4 207.1 C693.9 208.3 694.2 210.0 694.3 210.6" fill="none" stroke="#e6efd3" stroke-width="1.6" stroke-linecap="round" stroke-linejoin="round" />
<path d="M694.3 210.6 C693.5 211.7 690.3 216.1 689.5 217.2" fill="none" stroke="#e6efd3" stroke-width="1.5" stroke-linecap="round" stroke-linejoin="round" />
<path d="M652.9 200.3 C653.4 200.3 654.9 200.4 656.1 200.6 C657.4 200.8 659.6 201.5 660.3 201.7" fill="none" stroke="#e6efd3" stroke-width="1.8" stroke-linecap="round" stroke-linejoin="round" />
<path d="M733.9 199.8 C733.3 200.5 731.2 202.9 730.4 203.9 C729.6 204.8 729.3 205.1 729.1 205.3" fill="none" stroke="#e6efd3" stroke-width="1.8" stroke-linecap="round" stroke-linejoin="round" />
<path d="M566.5 266.9 C566.2 266.3 565.6 264.2 565.2 263.1 C564.8 261.9 564.1 260.5 563.9 259.9" fill="none" stroke="#e6efd3" stroke-width="1.6" stroke-linecap="round" stroke-linejoin="round" />
<path d="M563.9 259.9 C562.6 259.7 557.4 258.8 556.1 258.6" fill="none" stroke="#e6efd3" stroke-width="1.5" stroke-linecap="round" stroke-linejoin="round" />
<path d="M575.3 262.0 C575.8 262.7 577.6 264.7 578.0 266.1 C578.4 267.4 577.8 269.5 577.7 270.2" fill="none" stroke="#e6efd3" stroke-width="1.6" stroke-linecap="round" stroke-linejoin="round" />
<path d="M562.5 297.0 C563.0 297.8 564.6 300.1 565.1 301.5 C565.6 302.9 565.5 304.6 565.6 305.3" fill="none" stroke="#e6efd3" stroke-width="1.8" stroke-linecap="round" stroke-linejoin="round" />
<path d="M565.6 305.3 C564.9 306.2 562.1 309.8 561.4 310.7" fill="none" stroke="#e6efd3" stroke-width="1.5" stroke-linecap="round" stroke-linejoin="round" />
<path d="M646.0 311.5 C647.3 311.7 650.9 312.1 653.3 312.3 C655.8 312.5 659.5 312.5 660.7 312.5" fill="none" stroke="#e6efd3" stroke-width="2.2" stroke-linecap="round" stroke-linejoin="round" />
<path d="M655.1 306.0 C655.1 305.2 654.7 302.6 655.1 301.4 C655.4 300.3 656.7 299.4 657.0 298.9" fill="none" stroke="#e6efd3" stroke-width="1.8" stroke-linecap="round" stroke-linejoin="round" />
<path d="M636.8 322.2 C637.5 322.4 640.0 322.5 641.2 323.2 C642.4 324.0 643.5 326.0 643.9 326.6" fill="none" stroke="#e6efd3" stroke-width="2.2" stroke-linecap="round" stroke-linejoin="round" />
<path d="M643.9 326.6 C643.9 327.7 643.9 332.2 643.9 333.4" fill="none" stroke="#e6efd3" stroke-width="1.5" stroke-linecap="round" stroke-linejoin="round" />
<path d="M577.5 27.0 C578.6 26.5 582.5 24.6 584.4 23.8 C586.3 23.0 588.2 22.4 588.9 22.1" fill="none" stroke="#e6efd3" stroke-width="2.2" stroke-linecap="round" stroke-linejoin="round" />
<path d="M580.2 36.3 C579.0 37.0 575.4 39.6 573.3 40.5 C571.3 41.4 568.8 41.5 567.9 41.7" fill="none" stroke="#e6efd3" stroke-width="2.2" stroke-linecap="round" stroke-linejoin="round" />
<path d="M567.9 41.7 C566.9 41.1 563.0 38.8 562.1 38.2" fill="none" stroke="#e6efd3" stroke-width="1.5" stroke-linecap="round" stroke-linejoin="round" />
<path d="M656.8 17.8 C657.6 17.8 659.7 18.3 661.9 18.0 C664.0 17.8 668.4 16.7 669.7 16.4" fill="none" stroke="#e6efd3" stroke-width="1.8" stroke-linecap="round" stroke-linejoin="round" />
<path d="M669.7 16.4 C670.6 17.4 674.2 21.3 675.1 22.2" fill="none" stroke="#e6efd3" stroke-width="1.5" stroke-linecap="round" stroke-linejoin="round" />
<path d="M660.4 27.0 C659.8 27.4 658.2 28.3 656.8 29.1 C655.5 29.9 653.2 31.3 652.4 31.8" fill="none" stroke="#e6efd3" stroke-width="1.8" stroke-linecap="round" stroke-linejoin="round" />
<path d="M659.2 37.9 C659.8 38.2 661.7 38.6 662.7 39.7 C663.7 40.8 664.8 43.6 665.3 44.4" fill="none" stroke="#e6efd3" stroke-width="1.6" stroke-linecap="round" stroke-linejoin="round" />
<path d="M671.9 20.4 C672.5 21.1 674.5 22.9 675.8 24.3 C677.0 25.7 678.8 28.0 679.4 28.7" fill="none" stroke="#e6efd3" stroke-width="1.8" stroke-linecap="round" stroke-linejoin="round" />
<path d="M695.1 39.2 C696.1 39.0 699.0 38.3 701.0 38.5 C703.0 38.6 706.1 39.8 707.1 40.0" fill="none" stroke="#e6efd3" stroke-width="1.6" stroke-linecap="round" stroke-linejoin="round" />
<path d="M698.0 48.8 C697.2 49.1 694.5 50.0 693.3 50.3 C692.1 50.6 691.1 50.6 690.7 50.7" fill="none" stroke="#e6efd3" stroke-width="1.8" stroke-linecap="round" stroke-linejoin="round" />
<path d="M690.7 50.7 C690.1 50.1 687.6 47.6 687.0 47.0" fill="none" stroke="#e6efd3" stroke-width="1.5" stroke-linecap="round" stroke-linejoin="round" />
<path d="M695.1 59.5 C696.2 60.1 699.5 62.1 701.5 63.4 C703.5 64.6 706.3 66.2 707.2 66.8" fill="none" stroke="#e6efd3" stroke-width="2.2" stroke-linecap="round" stroke-linejoin="round" />
<path d="M732.9 50.3 C732.5 50.6 731.8 50.9 730.6 51.8 C729.5 52.8 726.7 55.4 726.0 56.1" fill="none" stroke="#e6efd3" stroke-width="2.2" stroke-linecap="round" stroke-linejoin="round" />
<path d="M726.0 56.1 C725.8 56.9 725.3 60.4 725.1 61.2" fill="none" stroke="#e6efd3" stroke-width="1.5" stroke-linecap="round" stroke-linejoin="round" />
<path d="M732.6 60.3 C733.0 60.9 734.3 63.3 735.1 64.2 C735.9 65.1 737.0 65.3 737.4 65.5" fill="none" stroke="#e6efd3" stroke-width="1.6" stroke-linecap="round" stroke-linejoin="round" />
<path d="M737.4 65.5 C737.1 66.4 736.3 70.1 736.1 71.1" fill="none" stroke="#e6efd3" stroke-width="1.5" stroke-linecap="round" stroke-linejoin="round" />
<path d="M727.1 69.8 C726.1 70.1 722.6 71.2 721.1 71.3 C719.5 71.5 718.3 70.7 717.7 70.5" fill="none" stroke="#e6efd3" stroke-width="1.8" stroke-linecap="round" stroke-linejoin="round" />
<path d="M673.3 70.1 C674.5 70.5 678.3 71.7 680.5 72.5 C682.6 73.4 685.2 74.7 686.1 75.2" fill="none" stroke="#e6efd3" stroke-width="2.2" stroke-linecap="round" stroke-linejoin="round" />
<path d="M716.8 107.8 C716.5 109.1 715.5 113.2 715.3 115.7 C715.0 118.1 715.2 121.5 715.2 122.7" fill="none" stroke="#e6efd3" stroke-width="1.6" stroke-linecap="round" stroke-linejoin="round" />
<path d="M715.2 122.7 C714.3 123.2 710.8 125.3 710.0 125.8" fill="none" stroke="#e6efd3" stroke-width="1.5" stroke-linecap="round" stroke-linejoin="round" />
<path d="M720.3 117.0 C721.2 117.5 724.1 119.0 725.5 120.0 C727.0 120.9 728.4 122.3 729.0 122.8" fill="none" stroke="#e6efd3" stroke-width="1.8" stroke-linecap="round" stroke-linejoin="round" />
<path d="M729.0 122.8 C730.2 122.7 734.9 122.5 736.0 122.4" fill="none" stroke="#e6efd3" stroke-width="1.5" stroke-linecap="round" stroke-linejoin="round" />
<path d="M546.8 57.8 C546.8 58.8 547.3 61.6 547.1 64.0 C546.8 66.3 545.6 70.6 545.3 71.9" fill="none" stroke="#e6efd3" stroke-width="1.6" stroke-linecap="round" stroke-linejoin="round" />
<path d="M556.8 58.7 C557.1 57.5 558.1 53.7 559.1 51.5 C560.1 49.4 561.9 46.8 562.5 45.9" fill="none" stroke="#e6efd3" stroke-width="2.2" stroke-linecap="round" stroke-linejoin="round" />
<path d="M497.5 47.0 C496.9 48.0 495.3 51.0 494.2 53.0 C493.1 55.0 491.3 58.0 490.8 59.0" fill="none" stroke="#e6efd3" stroke-width="2.2" stroke-linecap="round" stroke-linejoin="round" />
<path d="M500.0 56.3 C500.9 56.7 503.8 58.0 505.4 58.7 C507.0 59.4 508.8 60.3 509.5 60.6" fill="none" stroke="#e6efd3" stroke-width="1.8" stroke-linecap="round" stroke-linejoin="round" />
<path d="M457.1 20.8 C458.1 20.7 461.2 20.0 463.1 20.1 C465.1 20.2 467.8 21.1 468.8 21.3" fill="none" stroke="#e6efd3" stroke-width="1.6" stroke-linecap="round" stroke-linejoin="round" />
<path d="M468.8 21.3 C469.4 20.6 471.9 17.8 472.5 17.1" fill="none" stroke="#e6efd3" stroke-width="1.5" stroke-linecap="round" stroke-linejoin="round" />
<path d="M457.9 10.5 C456.6 10.3 452.3 9.2 450.2 9.1 C448.1 9.0 446.2 9.8 445.3 9.9" fill="none" stroke="#e6efd3" stroke-width="2.2" stroke-linecap="round" stroke-linejoin="round" />
<path d="M532.9 213.5 C533.6 214.2 535.2 216.2 537.0 217.3 C538.8 218.5 542.6 220.1 543.7 220.6" fill="none" stroke="#e6efd3" stroke-width="1.8" stroke-linecap="round" stroke-linejoin="round" />
<path d="M543.7 220.6 C544.9 220.1 549.8 217.9 551.0 217.4" fill="none" stroke="#e6efd3" stroke-width="1.5" stroke-linecap="round" stroke-linejoin="round" />
<path d="M530.2 256.1 C530.0 257.0 528.9 260.3 529.0 261.8 C529.0 263.2 530.3 264.2 530.6 264.7" fill="none" stroke="#e6efd3" stroke-width="2.2" stroke-linecap="round" stroke-linejoin="round" />
<path d="M530.6 264.7 C529.9 265.4 527.3 268.0 526.7 268.7" fill="none" stroke="#e6efd3" stroke-width="1.5" stroke-linecap="round" stroke-linejoin="round" />
<path d="M540.0 255.2 C539.9 254.1 539.1 250.7 538.9 248.6 C538.8 246.6 539.1 244.0 539.1 243.1" fill="none" stroke="#e6efd3" stroke-width="1.8" stroke-linecap="round" stroke-linejoin="round" />
<path d="M539.1 243.1 C539.8 242.5 542.6 240.5 543.3 240.0" fill="none" stroke="#e6efd3" stroke-width="1.5" stroke-linecap="round" stroke-linejoin="round" />
<path d="M534.4 296.3 C535.0 295.5 536.9 292.7 538.2 291.2 C539.5 289.7 541.5 288.1 542.2 287.4" fill="none" stroke="#e6efd3" stroke-width="2.2" stroke-linecap="round" stroke-linejoin="round" />
<path d="M542.2 287.4 C543.3 287.2 547.9 286.1 549.1 285.8" fill="none" stroke="#e6efd3" stroke-width="1.5" stroke-linecap="round" stroke-linejoin="round" />
<path d="M544.0 315.4 C544.6 315.8 545.9 317.0 547.6 317.7 C549.2 318.5 552.8 319.4 553.8 319.7" fill="none" stroke="#e6efd3" stroke-width="2.2" stroke-linecap="round" stroke-linejoin="round" />
<path d="M401.0 0.0 C402.1 2.1 405.1 7.2 407.6 12.4 C410.1 17.6 413.2 24.8 415.9 31.0 C418.6 37.2 420.6 44.1 424.0 49.6 C427.4 55.1 432.3 60.3 436.5 64.0 C440.7 67.7 443.1 68.5 449.0 72.0 C454.9 75.5 465.1 80.5 471.6 84.7 C478.1 88.9 482.5 92.9 488.0 97.0 C493.5 101.1 500.5 106.4 504.7 109.5 C508.9 112.6 509.4 112.4 513.0 115.7 C516.5 118.9 522.4 124.3 526.0 129.0 C529.6 133.7 532.3 138.9 534.4 143.7 C536.5 148.5 536.9 149.1 538.5 158.0 C540.1 166.9 542.9 186.0 544.0 197.0 C545.1 208.0 545.2 215.0 545.4 224.0 C545.6 233.0 545.2 242.0 545.4 251.0 C545.6 260.0 546.1 270.4 546.8 278.0 C547.5 285.6 548.0 290.5 549.5 296.8 C551.0 303.1 552.4 310.2 556.0 315.6 C559.6 321.0 565.3 325.6 571.0 329.0 C576.7 332.4 583.2 334.3 590.0 335.9 C596.8 337.5 607.9 338.1 611.5 338.5" fill="none" stroke="#dd9aa6" stroke-width="2.6" stroke-linecap="round" stroke-linejoin="round" />
<path d="M455.0 80.0 C458.5 78.0 468.9 71.7 475.8 68.0 C482.7 64.3 489.5 61.8 496.4 58.0 C503.3 54.2 510.1 50.0 517.0 45.5 C523.9 41.0 532.5 36.5 537.8 31.0 C543.1 25.5 545.5 16.6 549.0 12.4 C552.5 8.2 556.2 6.2 559.0 6.0 C561.8 5.8 564.8 10.2 566.0 11.0" fill="none" stroke="#f6c79f" stroke-width="1.8" stroke-linecap="round" stroke-linejoin="round" />
<path d="M533.0 104.0 C535.7 102.0 543.3 96.3 549.0 92.0 C554.7 87.7 563.5 82.5 567.0 78.0 C570.5 73.5 568.1 68.7 569.7 64.7 C571.3 60.7 572.6 57.1 576.4 54.0 C580.2 50.9 587.2 48.1 592.6 45.8 C598.0 43.6 603.9 42.7 608.8 40.5 C613.7 38.3 617.5 33.8 622.0 32.4 C626.5 31.1 633.5 32.4 635.8 32.4" fill="none" stroke="#f3f0a8" stroke-width="1.5" stroke-linecap="round" stroke-linejoin="round" />
<path d="M526.0 112.7 C529.1 112.4 539.9 110.7 544.7 110.7 C549.5 110.7 552.3 109.3 555.0 112.7 C557.7 116.1 558.7 126.1 561.0 131.0 C563.3 135.9 565.2 140.8 569.0 142.0 C572.8 143.2 579.2 140.6 584.0 138.0 C588.8 135.4 592.5 129.9 598.0 126.7 C603.5 123.5 610.2 120.5 616.9 118.7 C623.6 116.9 630.0 114.3 638.0 116.0 C646.0 117.7 657.3 127.5 665.0 129.0 C672.7 130.5 678.5 124.0 684.0 125.0 C689.5 126.0 692.8 132.0 697.8 134.8 C702.8 137.6 706.8 140.7 714.0 141.6 C721.2 142.5 735.4 139.3 741.0 140.0 C746.6 140.7 745.9 142.0 747.7 145.6 C749.5 149.2 750.3 156.1 751.7 161.8 C753.1 167.5 754.3 175.3 756.0 180.0 C757.7 184.7 761.0 188.3 762.0 190.0" fill="none" stroke="#f6c79f" stroke-width="2" stroke-linecap="round" stroke-linejoin="round" />
<path d="M572.4 182.0 C575.3 184.0 583.9 189.2 590.0 194.0 C596.1 198.8 604.3 205.1 608.8 210.5 C613.3 215.9 614.6 221.7 616.9 226.6 C619.1 231.5 621.4 234.6 622.3 240.0 C623.2 245.4 622.8 251.8 622.3 259.0 C621.8 266.2 620.5 275.3 619.6 283.0 C618.7 290.7 618.0 298.2 616.9 305.0 C615.8 311.8 614.1 318.4 612.8 323.7 C611.4 329.0 609.5 334.8 608.8 337.0" fill="none" stroke="#f6c79f" stroke-width="1.8" stroke-linecap="round" stroke-linejoin="round" />
<path d="M299.0 0.0 C300.0 5.0 303.3 20.8 305.0 30.0 C306.7 39.2 308.0 45.0 309.0 55.0 C310.0 65.0 310.0 80.0 311.0 90.0 C312.0 100.0 312.7 108.7 315.0 115.0 C317.3 121.3 319.7 124.5 325.0 128.0 C330.3 131.5 342.7 132.0 347.0 136.0 C351.3 140.0 351.0 146.3 351.0 152.0 C351.0 157.7 350.3 164.3 347.0 170.0 C343.7 175.7 336.3 179.7 331.0 186.0 C325.7 192.3 318.0 200.7 315.0 208.0 C312.0 215.3 313.0 221.0 313.0 230.0 C313.0 239.0 314.3 250.3 315.0 262.0 C315.7 273.7 317.0 287.0 317.0 300.0 C317.0 313.0 315.3 333.3 315.0 340.0" fill="none" stroke="#f2a99a" stroke-width="2.2" stroke-linecap="round" stroke-linejoin="round" />
<path d="M351.0 152.0 C352.7 156.7 356.3 172.3 361.0 180.0 C365.7 187.7 371.8 193.0 379.0 198.0 C386.2 203.0 396.5 206.0 404.0 210.0 C411.5 214.0 418.2 217.0 424.0 222.0 C429.8 227.0 435.8 232.0 439.0 240.0 C442.2 248.0 439.7 263.0 443.0 270.0 C446.3 277.0 451.3 280.0 459.0 282.0 C466.7 284.0 480.7 281.0 489.0 282.0 C497.3 283.0 505.7 287.0 509.0 288.0" fill="none" stroke="#f2a99a" stroke-width="2" stroke-linecap="round" stroke-linejoin="round" />
<path d="M309.0 55.0 C314.0 55.5 329.0 55.5 339.0 58.0 C349.0 60.5 359.0 64.7 369.0 70.0 C379.0 75.3 389.8 83.0 399.0 90.0 C408.2 97.0 416.5 106.7 424.0 112.0 C431.5 117.3 436.5 119.7 444.0 122.0 C451.5 124.3 460.7 125.7 469.0 126.0 C477.3 126.3 486.0 125.3 494.0 124.0 C502.0 122.7 513.2 119.0 517.0 118.0" fill="none" stroke="#f6c79f" stroke-width="1.6" stroke-linecap="round" stroke-linejoin="round" />
<path d="M315.0 208.0 C319.0 207.7 331.3 205.3 339.0 206.0 C346.7 206.7 357.3 211.0 361.0 212.0" fill="none" stroke="#f6c79f" stroke-width="1.5" stroke-linecap="round" stroke-linejoin="round" />
<path d="M369.0 70.0 C370.3 65.0 374.5 49.2 377.0 40.0 C379.5 30.8 382.3 21.7 384.0 15.0 C385.7 8.3 386.5 2.5 387.0 0.0" fill="none" stroke="#f6c79f" stroke-width="1.5" stroke-linecap="round" stroke-linejoin="round" />
<path d="M442.7 0.0 C442.9 3.4 443.7 13.9 443.7 20.7 C443.8 27.5 443.3 34.1 443.0 41.0 C442.7 47.9 442.7 55.5 441.7 62.0 C440.7 68.5 438.4 71.7 437.0 80.0 C435.6 88.3 434.0 103.3 433.4 111.6 C432.8 119.9 433.4 126.9 433.4 130.0" fill="none" stroke="#f6c79f" stroke-width="1.5" stroke-linecap="round" stroke-linejoin="round" />
<path d="M409.0 2.0 C411.8 2.0 420.4 1.0 426.0 2.0 C431.6 3.0 437.5 6.7 442.7 8.0 C447.9 9.3 450.4 10.0 457.0 10.0 C463.6 10.0 477.8 8.3 482.0 8.0" fill="none" stroke="#f6c79f" stroke-width="1.3" stroke-linecap="round" stroke-linejoin="round" />
<path d="M424.0 112.0 C423.5 118.3 422.5 137.0 421.0 150.0 C419.5 163.0 417.0 178.3 415.0 190.0 C413.0 201.7 410.0 215.0 409.0 220.0" fill="none" stroke="#f6c79f" stroke-width="1.3" stroke-linecap="round" stroke-linejoin="round" />
<path d="M469.0 126.0 C469.3 131.7 471.3 149.3 471.0 160.0 C470.7 170.7 469.0 180.0 467.0 190.0 C465.0 200.0 460.7 210.0 459.0 220.0 C457.3 230.0 456.7 239.7 457.0 250.0 C457.3 260.3 459.7 272.0 461.0 282.0 C462.3 292.0 463.7 300.3 465.0 310.0 C466.3 319.7 468.3 335.0 469.0 340.0" fill="none" stroke="#f6c79f" stroke-width="1.3" stroke-linecap="round" stroke-linejoin="round" />
<path d="M315.0 262.0 C319.0 263.0 332.0 264.7 339.0 268.0 C346.0 271.3 350.0 279.0 357.0 282.0 C364.0 285.0 374.0 283.0 381.0 286.0 C388.0 289.0 396.0 297.7 399.0 300.0" fill="none" stroke="#f6c79f" stroke-width="1.4" stroke-linecap="round" stroke-linejoin="round" />
<path d="M459.0 282.0 C458.3 286.7 455.0 300.3 455.0 310.0 C455.0 319.7 458.3 335.0 459.0 340.0" fill="none" stroke="#f6c79f" stroke-width="1.4" stroke-linecap="round" stroke-linejoin="round" />
<path d="M611.5 338.5 C616.1 338.1 631.1 337.4 639.0 336.0 C646.9 334.6 653.7 332.7 659.0 330.0 C664.3 327.3 669.0 321.7 671.0 320.0" fill="none" stroke="#f2a99a" stroke-width="2" stroke-linecap="round" stroke-linejoin="round" />
<path d="M309.0 0.0 C309.7 5.0 312.7 21.3 313.0 30.0 C313.3 38.7 309.7 47.7 311.0 52.0 C312.3 56.3 317.7 53.0 321.0 56.0 C324.3 59.0 326.3 65.0 331.0 70.0 C335.7 75.0 341.0 80.3 349.0 86.0 C357.0 91.7 369.7 98.0 379.0 104.0 C388.3 110.0 398.0 116.7 405.0 122.0 C412.0 127.3 417.0 129.7 421.0 136.0 C425.0 142.3 427.0 151.0 429.0 160.0 C431.0 169.0 431.7 181.3 433.0 190.0 C434.3 198.7 435.0 205.3 437.0 212.0 C439.0 218.7 441.7 224.3 445.0 230.0 C448.3 235.7 454.2 239.7 457.0 246.0 C459.8 252.3 460.8 259.0 462.0 268.0 C463.2 277.0 462.8 291.3 464.0 300.0 C465.2 308.7 464.8 314.0 469.0 320.0 C473.2 326.0 483.2 332.3 489.0 336.0 C494.8 339.7 501.5 341.0 504.0 342.0" fill="none" stroke="#7c7c80" stroke-width="1.4" stroke-linecap="round" stroke-linejoin="round" stroke-dasharray="6 2"/>
<path d="M433.0 190.0 C429.0 195.0 416.3 212.3 409.0 220.0 C401.7 227.7 395.7 230.7 389.0 236.0 C382.3 241.3 375.3 245.5 369.0 252.0 C362.7 258.5 354.3 267.0 351.0 275.0 C347.7 283.0 351.3 291.5 349.0 300.0 C346.7 308.5 341.0 319.3 337.0 326.0 C333.0 332.7 327.0 337.7 325.0 340.0" fill="none" stroke="#7c7c80" stroke-width="1" stroke-linecap="round" stroke-linejoin="round" stroke-dasharray="5 2"/>
<path d="M762.0 303.5 C758.0 303.8 744.7 303.9 738.0 305.0 C731.3 306.1 727.8 306.5 722.0 310.0 C716.2 313.5 708.2 321.0 703.0 326.0 C697.8 331.0 693.0 337.7 691.0 340.0" fill="none" stroke="#7c7c80" stroke-width="1.4" stroke-linecap="round" stroke-linejoin="round" stroke-dasharray="6 2"/>
</g>
<path d="M185.0 5.0 L197.0 22.0 L209.0 33.0 L229.0 48.0 L253.0 65.0 L273.0 71.0" fill="none" stroke="#dd3030" stroke-width="1.1" stroke-linecap="round" stroke-linejoin="round" />
<path d="M245.7 7.8 L259.0 3.0 L269.4 54.4 L261.2 57.3 L245.7 7.8" fill="none" stroke="#dd3030" stroke-width="1" stroke-linecap="round" stroke-linejoin="round" />
<path d="M273.0 71.0 L276.5 40.0 L275.7 64.0 L275.7 73.3 L274.5 88.9 L269.0 91.0 L271.0 106.7 L273.4 111.0 L283.4 112.0 L289.0 133.0 L293.0 160.0 L296.0 190.0 L297.0 230.0 L297.0 252.0 L298.0 290.0 L299.5 340.0" fill="none" stroke="#dd3030" stroke-width="1.4" stroke-linecap="round" stroke-linejoin="round" />
<path d="M218.0 0.0 L220.0 8.0" fill="none" stroke="#dd3030" stroke-width="1" stroke-linecap="round" stroke-linejoin="round" />
<path d="M219.0 0.0 L227.0 12.0 L239.0 25.0 L261.0 40.0" fill="none" stroke="#dd3030" stroke-width="0" stroke-linecap="round" stroke-linejoin="round" />
<path d="M714.0 337.0 L724.7 333.0 L751.7 334.5 L759.8 331.8" fill="none" stroke="#c0503a" stroke-width="1" stroke-linecap="round" stroke-linejoin="round" />
<path d="M291.0 133.0 C291.7 137.5 293.8 150.5 295.0 160.0 C296.2 169.5 297.3 178.3 298.0 190.0 C298.7 201.7 298.8 219.7 299.0 230.0 C299.2 240.3 298.8 242.0 299.0 252.0 C299.2 262.0 299.6 275.3 300.0 290.0 C300.4 304.7 301.2 331.7 301.5 340.0" fill="none" stroke="#f5c49a" stroke-width="1.4" stroke-linecap="round" stroke-linejoin="round" />
<rect x="558.5" y="64.5" width="15" height="9" rx="1.5" fill="#f8ecd2" stroke="#d9c9a0" stroke-width=".5"/><text x="566.0" y="71.8" font-size="7.5" text-anchor="middle" fill="#6b5a3a" font-family="Liberation Sans,sans-serif">232</text>
<rect x="511.5" y="113.5" width="11" height="9" rx="1.5" fill="#f6d5dc" stroke="#d9c9a0" stroke-width=".5"/><text x="517.0" y="120.8" font-size="7.5" text-anchor="middle" fill="#8a3a4a" font-family="Liberation Sans,sans-serif">E7</text>
<rect x="617.5" y="235.5" width="11" height="9" rx="1.5" fill="#f8ecd2" stroke="#d9c9a0" stroke-width=".5"/><text x="623.0" y="242.8" font-size="7.5" text-anchor="middle" fill="#6b5a3a" font-family="Liberation Sans,sans-serif">62</text>
<rect x="338.5" y="236.5" width="11" height="9" rx="1.5" fill="#f8ecd2" stroke="#d9c9a0" stroke-width=".5"/><text x="344.0" y="243.8" font-size="7.5" text-anchor="middle" fill="#6b5a3a" font-family="Liberation Sans,sans-serif">65</text>
<rect x="472.0" y="259.5" width="10" height="9" rx="1.5" fill="#f8ecd2" stroke="#d9c9a0" stroke-width=".5"/><text x="477.0" y="266.8" font-size="7.5" text-anchor="middle" fill="#6b5a3a" font-family="Liberation Sans,sans-serif">41</text>
<rect x="659.0" y="317.5" width="10" height="9" rx="1.5" fill="#f8ecd2" stroke="#d9c9a0" stroke-width=".5"/><text x="664.0" y="324.8" font-size="7.5" text-anchor="middle" fill="#6b5a3a" font-family="Liberation Sans,sans-serif">13</text>
<rect x="659.0" y="326.5" width="10" height="9" rx="1.5" fill="#f8ecd2" stroke="#d9c9a0" stroke-width=".5"/><text x="664.0" y="333.8" font-size="7.5" text-anchor="middle" fill="#6b5a3a" font-family="Liberation Sans,sans-serif">46</text>
<rect x="349.0" y="25.5" width="10" height="9" rx="1.5" fill="#f8ecd2" stroke="#d9c9a0" stroke-width=".5"/><text x="354.0" y="32.8" font-size="7.5" text-anchor="middle" fill="#6b5a3a" font-family="Liberation Sans,sans-serif">11</text>
<path d="M511.0 19.3 L513.0 15.5 L515.0 19.3Z" fill="#c98a58" opacity=".8"/>
<path d="M690.0 5.8 L692.0 2.0 L694.0 5.8Z" fill="#c98a58" opacity=".8"/>
<path d="M710.6 14.8 L712.6 11.0 L714.6 14.8Z" fill="#c98a58" opacity=".8"/>
<path d="M743.8 5.8 L745.8 2.0 L747.8 5.8Z" fill="#c98a58" opacity=".8"/>
<path d="M552.8 112.4 L554.8 108.6 L556.8 112.4Z" fill="#c98a58" opacity=".8"/>
<path d="M728.0 113.8 L730.0 110.0 L732.0 113.8Z" fill="#c98a58" opacity=".8"/>
<path d="M473.0 33.8 L475.0 30.0 L477.0 33.8Z" fill="#c98a58" opacity=".8"/>
<path d="M447.0 96.8 L449.0 93.0 L451.0 96.8Z" fill="#c98a58" opacity=".8"/>
<path d="M429.0 113.8 L431.0 110.0 L433.0 113.8Z" fill="#c98a58" opacity=".8"/>
<path d="M729.0 331.8 L731.0 328.0 L733.0 331.8Z" fill="#c98a58" opacity=".8"/>
<text x="378" y="172" font-size="9.5" text-anchor="middle" fill="#333" font-family="Liberation Sans,Noto Sans CJK JP,sans-serif" stroke="#fff" stroke-width="2" paint-order="stroke" opacity=".9">秋田</text>
<g>
<use href="#mk" x="265" y="9"/>
<use href="#mk" x="271" y="23"/>
<use href="#mk" x="250" y="46"/>
<use href="#mk" x="297" y="11"/>
<use href="#mk" x="313" y="10"/>
<use href="#mk" x="323" y="4"/>
<use href="#mk" x="311" y="18"/>
<use href="#mk" x="331" y="17"/>
<use href="#mk" x="307" y="29"/>
<use href="#mk" x="344" y="42"/>
<use href="#mk" x="347" y="43"/>
<use href="#mk" x="369" y="5"/>
<use href="#mk" x="393" y="2"/>
<use href="#mk" x="390" y="17"/>
<use href="#mk" x="370" y="61"/>
<use href="#mk" x="362" y="73"/>
<use href="#mk" x="365" y="76"/>
<use href="#mk" x="410" y="64"/>
<use href="#mk" x="446" y="81"/>
<use href="#mk" x="455" y="85"/>
<use href="#mk" x="437" y="95"/>
<use href="#mk" x="566" y="12"/>
<use href="#mk" x="339" y="130"/>
<use href="#mk" x="405" y="125"/>
<use href="#mk" x="375" y="142"/>
<use href="#mk" x="397" y="146"/>
<use href="#mk" x="412" y="156"/>
<use href="#mk" x="408" y="166"/>
<use href="#mk" x="401" y="175"/>
<use href="#mk" x="429" y="173"/>
<use href="#mk" x="419" y="190"/>
<use href="#mk" x="469" y="138"/>
<use href="#mk" x="457" y="143"/>
<use href="#mk" x="453.79999999999995" y="154.3"/>
<use href="#mk" x="452.79999999999995" y="158"/>
<use href="#mk" x="451" y="163"/>
<use href="#mk" x="449" y="169.5"/>
<use href="#mk" x="483" y="165"/>
<use href="#mk" x="498" y="133"/>
<use href="#mk" x="507" y="161"/>
<use href="#mk" x="492" y="165"/>
<use href="#mk" x="488" y="179"/>
<use href="#mk" x="486" y="181.5"/>
<use href="#mk" x="484" y="184"/>
<use href="#mk" x="482.29999999999995" y="188.60000000000002"/>
<use href="#mk" x="480.4" y="193.3"/>
<use href="#mk" x="478.5" y="198"/>
<use href="#mk" x="476.6" y="203"/>
<use href="#mk" x="540" y="162"/>
<use href="#mk" x="543" y="173"/>
<use href="#mk" x="532" y="179"/>
<use href="#mk" x="519" y="184"/>
<use href="#mk" x="535" y="189"/>
<use href="#mk" x="507" y="201"/>
<use href="#mk" x="607" y="136"/>
<use href="#mk" x="596" y="143"/>
<use href="#mk" x="569" y="150"/>
<use href="#mk" x="578" y="151"/>
<use href="#mk" x="572" y="168"/>
<use href="#mk" x="648" y="122"/>
<use href="#mk" x="651" y="136"/>
<use href="#mk" x="424" y="219"/>
<use href="#mk" x="426" y="225"/>
<use href="#mk" x="412" y="232"/>
<use href="#mk" x="429" y="231"/>
<use href="#mk" x="435" y="235"/>
<use href="#mk" x="469" y="214"/>
<use href="#mk" x="472" y="222"/>
<use href="#mk" x="457" y="226"/>
<use href="#mk" x="464" y="235"/>
<use href="#mk" x="453" y="245"/>
<use href="#mk" x="469" y="247"/>
<use href="#mk" x="467" y="254"/>
<use href="#mk" x="514" y="234"/>
<use href="#mk" x="493" y="245"/>
<use href="#mk" x="349" y="260"/>
<use href="#mk" x="385" y="269"/>
<use href="#mk" x="346" y="310"/>
<use href="#mk" x="411" y="336"/>
<use href="#mk" x="484" y="298"/>
<use href="#mk" x="515" y="285"/>
<use href="#mk" x="491" y="298"/>
<use href="#mk" x="518" y="300"/>
<use href="#mk" x="517" y="308"/>
<use href="#mk" x="518" y="312"/>
<use href="#mk" x="523" y="317"/>
<use href="#mk" x="547" y="304"/>
<use href="#mk" x="517" y="334"/>
<use href="#mk" x="757" y="208"/>
<use href="#mk" x="739" y="228"/>
<use href="#mk" x="709" y="242"/>
<use href="#mk" x="695" y="256"/>
<use href="#mk" x="689" y="265"/>
<use href="#mk" x="673" y="294"/>
<use href="#mk" x="655" y="313"/>
<use href="#mk" x="635" y="336"/>
<use href="#mk" x="646" y="338"/>
<use href="#mk" x="611" y="340"/>
</g>
<g transform="translate(381,168) scale(1,1.1)"><path d="M0 0 C-1.500 -5 -8 -9.500 -8 -16 A8 8 0 0 1 8 -16 C8 -9.500 1.500 -5 0 0Z" fill="#2f7fc9"/><circle cx="0" cy="-16" r="2.800" fill="#fff"/></g>
</svg>
<div class="msearch">施設名などを入力</div>
<div class="mbtn" style="left:7px;top:45px;width:46px">航空写真</div>
<div class="mbtn" style="left:7px;top:83px;width:30px">地図</div>
<div class="mstat">現在周囲1000kmで検索中...</div>
<div class="mfull"><svg width="25" height="24" viewBox="0 0 25 24"><path d="M8 10.300v-2.600h2.600M14.900 7.700h2.600v2.600M17.500 13.700v2.600h-2.600M10.600 16.300h-2.600v-2.600" fill="none" stroke="#333" stroke-width="1.200"/></svg></div>
</div><!--/map-->

<div class="gm">Google Mapページへ</div>
<div class="info"><span class="abs" style="left:5px"><b>表示件数：</b>512件</span><span class="abs" style="left:91px"><b>検索日時：</b><span style="letter-spacing:.15px">2025/11/08 00:00 ～ 2025/11/11 23:59</span></span><span class="abs" style="left:313px"><b>(直近2週間のデータを表示しています)</b></span></div>
<div class="thead">
  <span style="left:10px">No</span><svg class="abs" style="left:33.5px;top:7.5px" width="6" height="10" viewBox="0 0 6 10"><path d="M3 0.300 L5.800 4 H0.200 Z M3 9.700 L5.800 6 H0.200 Z" fill="#fff"/></svg><span style="left:72px">目撃日時</span><svg class="abs" style="left:121.5px;top:7.5px" width="6" height="10" viewBox="0 0 6 10"><path d="M3 0.300 L5.800 4 H0.200 Z M3 9.700 L5.800 6 H0.200 Z" fill="#fff"/></svg><span style="left:197px">情報種別</span><span style="left:260px">市町村</span><span style="left:322px">地番情報</span><span style="left:447px">獣種</span><span style="left:572px">性別</span><span style="left:634px">目撃情報</span>
</div>
<div class="trow">
  <span style="left:10px">21441</span><span style="left:72px">2025/11/11 20:03</span><span style="left:197px">目撃</span><span style="left:258px">仙北市</span><span style="left:319px;width:115px">〒014-1115 秋田県仙北市田沢湖小松城廻</span><span style="left:443px">ツキノワグマ</span><span style="left:566px">不明</span><span style="left:628px;width:112px">体長約1mの熊1頭が目撃され、北西方向へ立ち去った。近くの建物まで約5m。</span>
</div>
<div class="post">出没情報を投稿する</div>
</body>
</html>
